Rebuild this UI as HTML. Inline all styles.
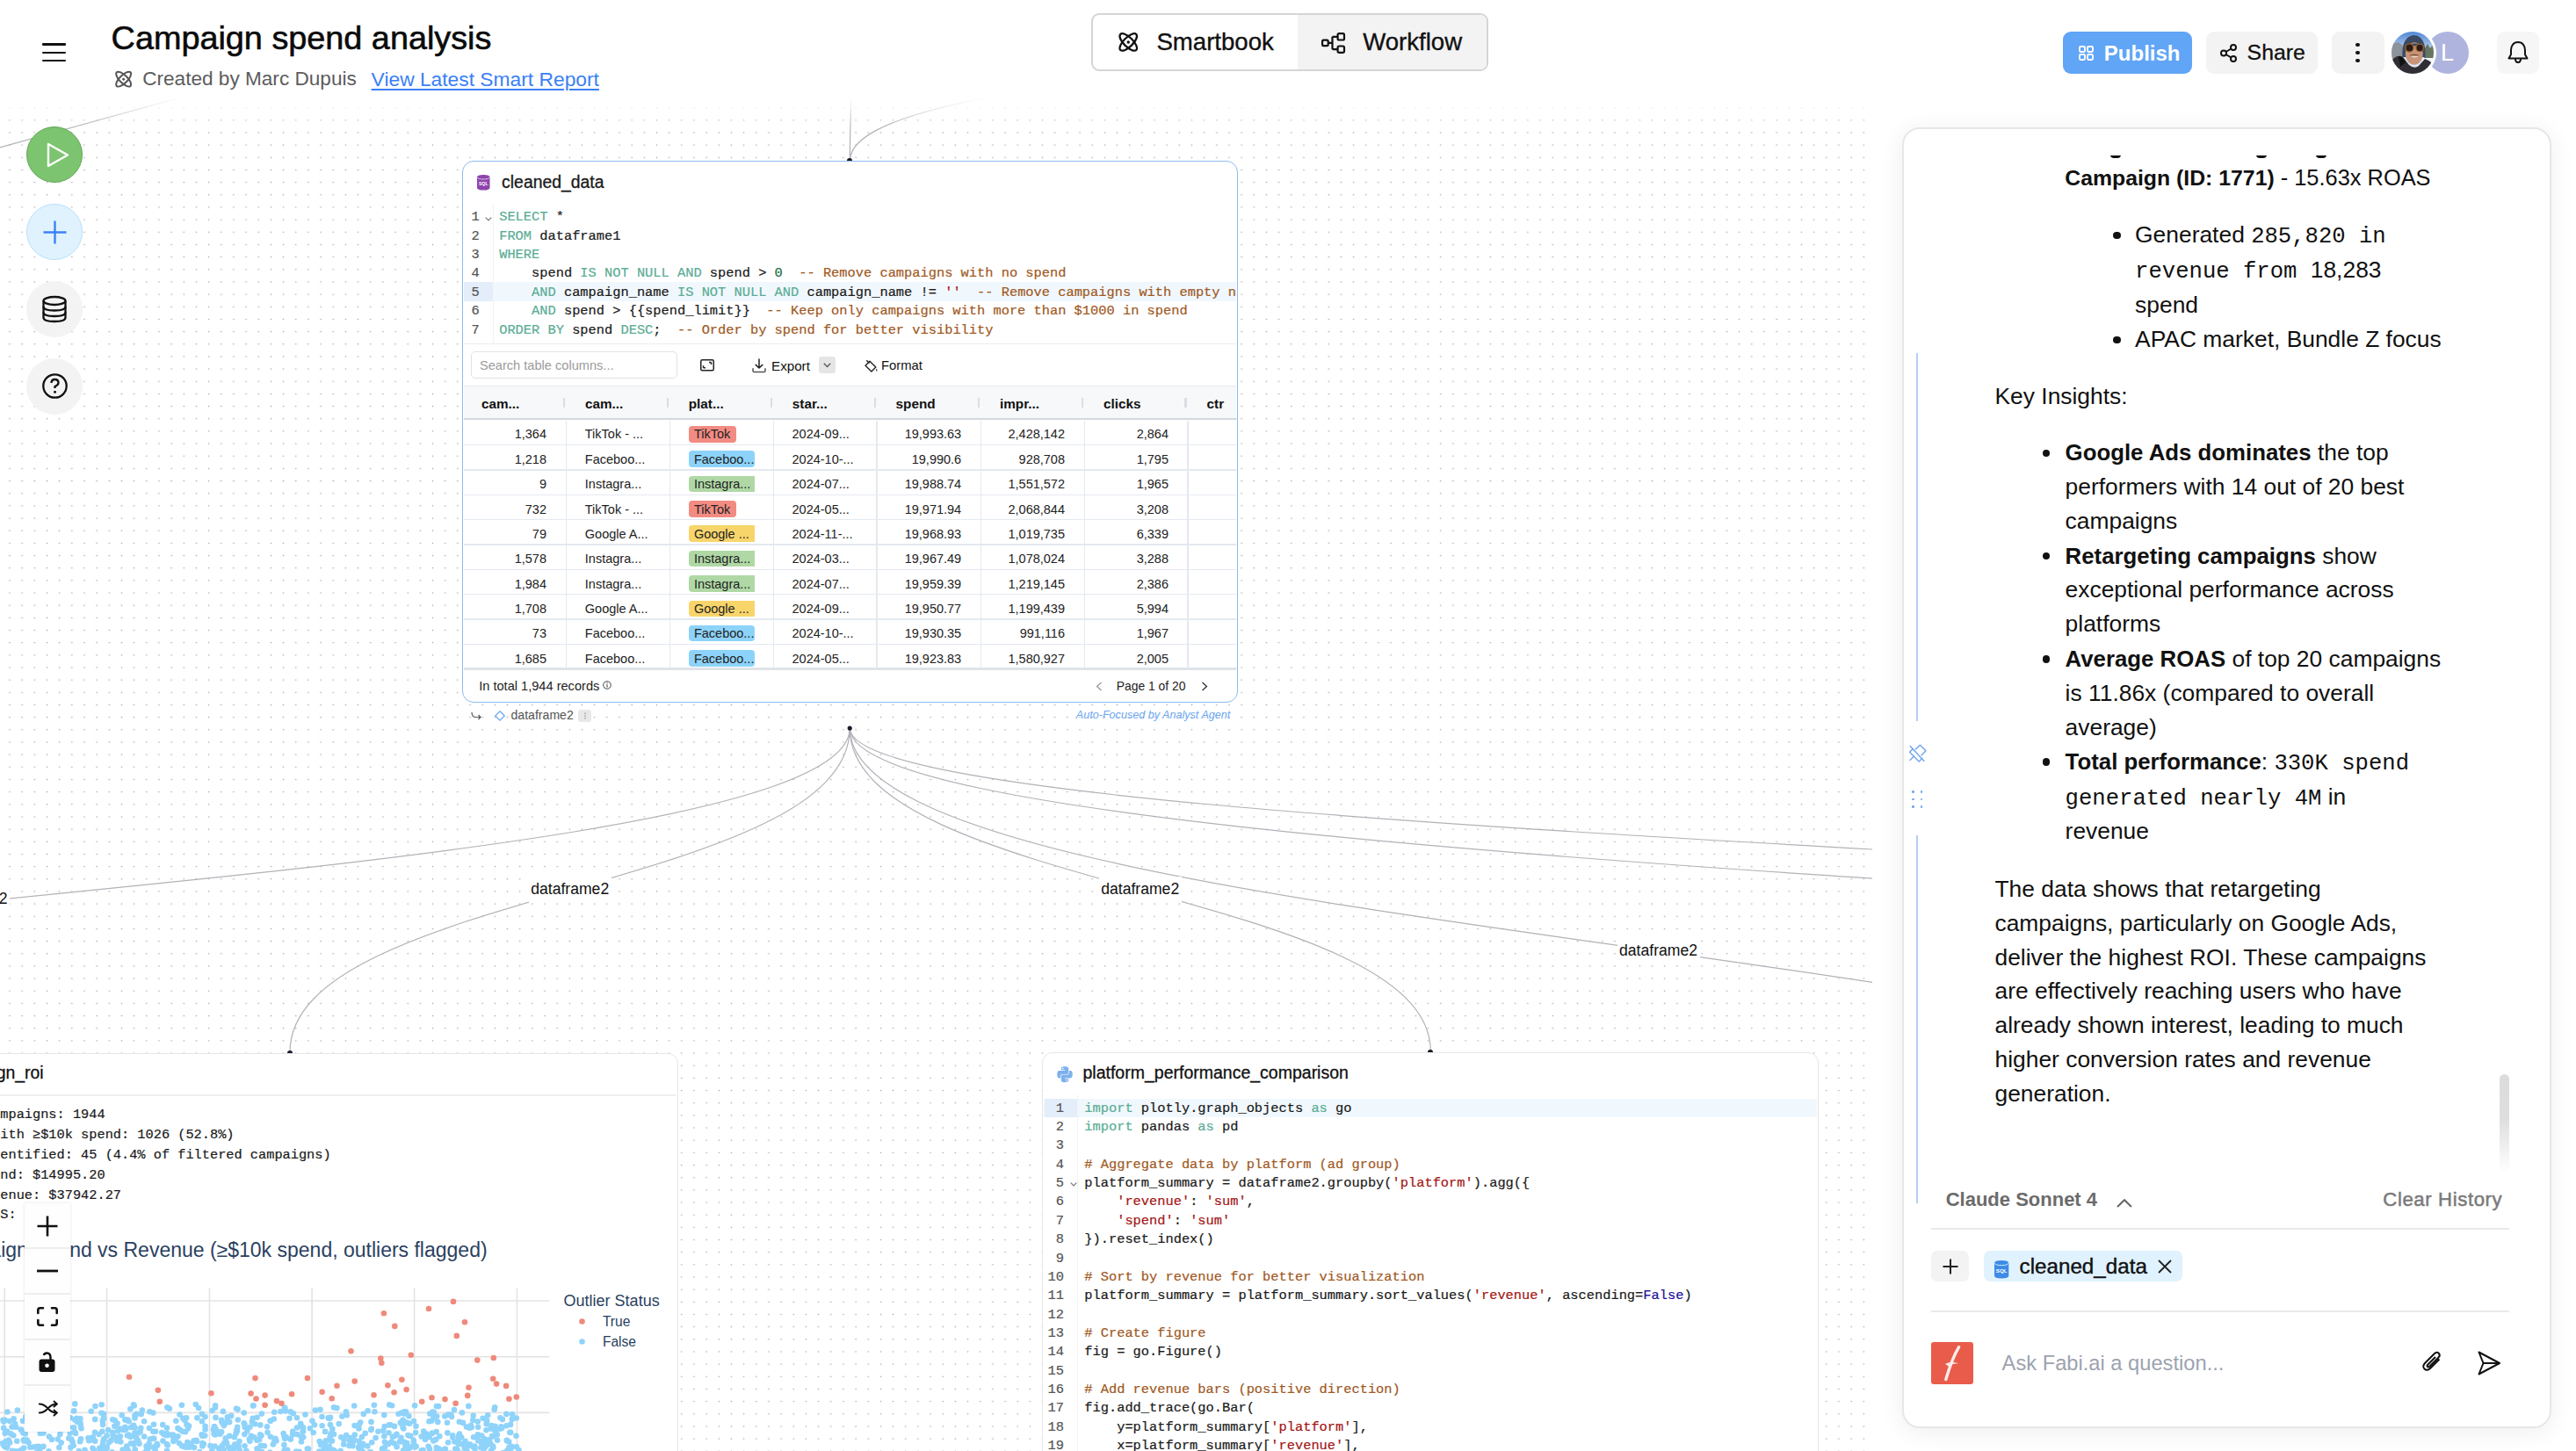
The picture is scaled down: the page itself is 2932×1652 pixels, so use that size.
<!DOCTYPE html><html><head><meta charset="utf-8"><title>Campaign spend analysis</title><style>
*{box-sizing:border-box;margin:0;padding:0}
html,body{width:2932px;height:1652px;overflow:hidden}
body{position:relative;background:#fff;font-family:"Liberation Sans",sans-serif;color:#111}
.a{position:absolute}
.t{position:absolute;white-space:pre;line-height:1}
svg.a{overflow:visible}
</style></head><body><div class="a" style="left:0;top:0;width:2131px;height:1652px;overflow:hidden"><svg class="a" style="left:0;top:0" width="2131" height="1652"><defs><pattern id="dp" x="3.918" y="2.219" width="14.163" height="14.163" patternUnits="userSpaceOnUse"><circle cx="7.082" cy="7.082" r="0.82" fill="#a8a8b0"/></pattern></defs><rect width="2131" height="1652" fill="url(#dp)"/></svg><svg class="a" style="left:0;top:0" width="2131" height="1652"><path d="M967.2,829.1 C967.2,1027.7 -1040.3,1027.7 -1040.3,1226.2" fill="none" stroke="#b1b1b8" stroke-width="1.2"/><path d="M967.2,829.1 C967.2,1013.5 330.0,1013.5 330.0,1198.0" fill="none" stroke="#b1b1b8" stroke-width="1.2"/><path d="M967.2,829.1 C967.2,1013.2 1628.4,1013.2 1628.4,1197.3" fill="none" stroke="#b1b1b8" stroke-width="1.2"/><path d="M967.2,829.1 C967.2,1077.8 2736.3,1077.8 2736.3,1326.6" fill="none" stroke="#b1b1b8" stroke-width="1.2"/><path d="M967.2,829.1 C967.2,974.6 3563.4,974.6 3563.4,1120.1" fill="none" stroke="#b1b1b8" stroke-width="1.2"/><path d="M967.2,829.1 C967.2,1035.1 4431.6,1035.1 4431.6,1241.1" fill="none" stroke="#b1b1b8" stroke-width="1.2"/><path d="M1435.2,8.65 C1435.2,95.8 967.3,95.8 967.3,183.0" fill="none" stroke="#b1b1b8" stroke-width="1.2"/><path d="M967.3,183 C967.3,150 968.8,112 972.5,-20" fill="none" stroke="#b1b1b8" stroke-width="1.2"/><path d="M-100,195.7 L420,51.5" fill="none" stroke="#b1b1b8" stroke-width="1.2"/><circle cx="967.2" cy="829.1" r="2.6" fill="#1a1a2a"/></svg><div class="a" style="left:-83.00px;top:1010.00px;width:94.00px;height:29.00px;background:#fff"></div><div class="t" style="left:-83.00px;top:1015.20px;font-family:'Liberation Sans', sans-serif;font-size:17.6px;width:94px;text-align:center;color:#111">dataframe2</div><div class="a" style="left:601.70px;top:998.70px;width:94.00px;height:29.00px;background:#fff"></div><div class="t" style="left:601.70px;top:1003.90px;font-family:'Liberation Sans', sans-serif;font-size:17.6px;width:94px;text-align:center;color:#111">dataframe2</div><div class="a" style="left:1250.70px;top:998.40px;width:94.00px;height:29.00px;background:#fff"></div><div class="t" style="left:1250.70px;top:1003.60px;font-family:'Liberation Sans', sans-serif;font-size:17.6px;width:94px;text-align:center;color:#111">dataframe2</div><div class="a" style="left:1840.50px;top:1069.10px;width:94.00px;height:29.00px;background:#fff"></div><div class="t" style="left:1840.50px;top:1074.30px;font-family:'Liberation Sans', sans-serif;font-size:17.6px;width:94px;text-align:center;color:#111">dataframe2</div></div><div class="a" style="left:525.50px;top:183.30px;width:883.90px;height:616.90px;background:#fff;border:1.5px solid #8dbbf1;border-radius:13px"></div><div class="a" style="left:0;top:0;width:2932px;height:1652px;clip-path:inset(185.3px 1524.6px 853.8px 527.5px round 11px)"><svg class="a" style="left:543.40px;top:199.30px;" width="14.5" height="17.5" viewBox="0 0 14.5 17.5"><path d="M0 2.8 Q0 0 7.25 0 Q14.5 0 14.5 2.8 V14.7 Q14.5 17.5 7.25 17.5 Q0 17.5 0 14.7 Z" fill="#8e44ad"/><path d="M0.5 2.8 Q0.5 5 7.25 5 Q14.0 5 14.0 2.8" fill="none" stroke="#fff" stroke-opacity="0.8" stroke-width="0.8"/><text x="7.25" y="11.55" font-family="Liberation Sans" font-weight="700" font-size="5.2" fill="#fff" text-anchor="middle">SQL</text></svg><div class="t" style="left:571.10px;top:197.87px;font-family:'Liberation Sans', sans-serif;font-size:19.4px;color:#1a1a1a;-webkit-text-stroke:0.3px #1a1a1a">cleaned_data</div><div class="a" style="left:527.50px;top:321.00px;width:33.90px;height:21.50px;background:#e3eefa"></div><div class="a" style="left:561.40px;top:321.00px;width:847.60px;height:21.50px;background:#f1f8fd"></div><div class="a" style="left:561.00px;top:231.80px;width:1.00px;height:160.00px;background:#f3f3f3"></div><div class="t" style="left:515.80px;top:240.43px;width:30px;text-align:right;font-family:'Liberation Mono', monospace;font-size:15.37px;-webkit-text-stroke-width:0.2px;color:#555">1</div><div class="t" style="left:568.20px;top:240.43px;font-family:'Liberation Mono', monospace;font-size:15.37px;-webkit-text-stroke-width:0.2px;"><span style="color:#5aac95">SELECT</span><span style="color:#1a1a1a"> *</span></div><div class="t" style="left:515.80px;top:261.78px;width:30px;text-align:right;font-family:'Liberation Mono', monospace;font-size:15.37px;-webkit-text-stroke-width:0.2px;color:#555">2</div><div class="t" style="left:568.20px;top:261.78px;font-family:'Liberation Mono', monospace;font-size:15.37px;-webkit-text-stroke-width:0.2px;"><span style="color:#5aac95">FROM</span><span style="color:#1a1a1a"> dataframe1</span></div><div class="t" style="left:515.80px;top:283.13px;width:30px;text-align:right;font-family:'Liberation Mono', monospace;font-size:15.37px;-webkit-text-stroke-width:0.2px;color:#555">3</div><div class="t" style="left:568.20px;top:283.13px;font-family:'Liberation Mono', monospace;font-size:15.37px;-webkit-text-stroke-width:0.2px;"><span style="color:#5aac95">WHERE</span></div><div class="t" style="left:515.80px;top:304.48px;width:30px;text-align:right;font-family:'Liberation Mono', monospace;font-size:15.37px;-webkit-text-stroke-width:0.2px;color:#555">4</div><div class="t" style="left:568.20px;top:304.48px;font-family:'Liberation Mono', monospace;font-size:15.37px;-webkit-text-stroke-width:0.2px;"><span style="color:#1a1a1a">    spend </span><span style="color:#5aac95">IS NOT NULL AND</span><span style="color:#1a1a1a"> spend &gt; </span><span style="color:#1d6b45">0</span><span style="color:#a0591f">  -- Remove campaigns with no spend</span></div><div class="t" style="left:515.80px;top:325.83px;width:30px;text-align:right;font-family:'Liberation Mono', monospace;font-size:15.37px;-webkit-text-stroke-width:0.2px;color:#555">5</div><div class="t" style="left:568.20px;top:325.83px;font-family:'Liberation Mono', monospace;font-size:15.37px;-webkit-text-stroke-width:0.2px;"><span style="color:#1a1a1a">    </span><span style="color:#5aac95">AND</span><span style="color:#1a1a1a"> campaign_name </span><span style="color:#5aac95">IS NOT NULL AND</span><span style="color:#1a1a1a"> campaign_name != </span><span style="color:#a31515">''</span><span style="color:#a0591f">  -- Remove campaigns with empty names</span></div><div class="t" style="left:515.80px;top:347.18px;width:30px;text-align:right;font-family:'Liberation Mono', monospace;font-size:15.37px;-webkit-text-stroke-width:0.2px;color:#555">6</div><div class="t" style="left:568.20px;top:347.18px;font-family:'Liberation Mono', monospace;font-size:15.37px;-webkit-text-stroke-width:0.2px;"><span style="color:#1a1a1a">    </span><span style="color:#5aac95">AND</span><span style="color:#1a1a1a"> spend &gt; {{spend_limit}}</span><span style="color:#a0591f">  -- Keep only campaigns with more than $1000 in spend</span></div><div class="t" style="left:515.80px;top:368.53px;width:30px;text-align:right;font-family:'Liberation Mono', monospace;font-size:15.37px;-webkit-text-stroke-width:0.2px;color:#555">7</div><div class="t" style="left:568.20px;top:368.53px;font-family:'Liberation Mono', monospace;font-size:15.37px;-webkit-text-stroke-width:0.2px;"><span style="color:#5aac95">ORDER BY</span><span style="color:#1a1a1a"> spend </span><span style="color:#5aac95">DESC</span><span style="color:#1a1a1a">;</span><span style="color:#a0591f">  -- Order by spend for better visibility</span></div><svg class="a" style="left:551.50px;top:246.50px;" width="8" height="5" viewBox="0 0 8 5"><path d="M0.7 0.7 L4 4 L7.3 0.7" fill="none" stroke="#777" stroke-width="1.2"/></svg><div class="a" style="left:527.50px;top:391.30px;width:881.50px;height:1.20px;background:#ececec"></div><div class="a" style="left:536.00px;top:399.50px;width:234.90px;height:31.80px;border:1.5px solid #e2e2e2;border-radius:5px"></div><div class="t" style="left:546.00px;top:409.34px;font-family:'Liberation Sans', sans-serif;font-size:14.6px;color:#9b9b9b">Search table columns...</div><svg class="a" style="left:796.50px;top:409.00px;" width="16" height="13.5" viewBox="0 0 16 13.5"><g fill="none" stroke="#222" stroke-width="1.5"><rect x="0.75" y="0.75" width="14.5" height="12" rx="1.5"/><path d="M3.5 9.8 L3.5 7.3 M3.5 9.8 L6 9.8 M12.5 3.5 L12.5 6 M12.5 3.5 L10 3.5"/></g></svg><svg class="a" style="left:855.80px;top:407.50px;" width="16" height="17" viewBox="0 0 16 17"><g fill="none" stroke-width="1.5" stroke-linecap="round" stroke-linejoin="round"><path d="M8 1 V11 M4.2 7.4 L8 11 L11.8 7.4" stroke="#222"/><path d="M1 11.8 V14.2 Q1 15.6 2.4 15.6 H13.6 Q15 15.6 15 14.2 V11.8" stroke="#555"/></g></svg><div class="t" style="left:878.00px;top:408.83px;font-family:'Liberation Sans', sans-serif;font-size:15.2px;color:#111">Export</div><div class="a" style="left:932.00px;top:406.30px;width:18.60px;height:18.60px;background:#e5e5e5;border-radius:3px"></div><svg class="a" style="left:937.00px;top:413.00px;" width="9" height="5.5" viewBox="0 0 9 5.5"><path d="M0.8 0.8 L4.5 4.5 L8.2 0.8" fill="none" stroke="#555" stroke-width="1.3"/></svg><svg class="a" style="left:983.70px;top:408.50px;" width="16" height="15" viewBox="0 0 16 15"><g fill="none" stroke="#222" stroke-width="1.4" stroke-linejoin="round"><path d="M1 7.2 L6 2.3 L12.8 9.1 L7.9 14 Z"/><path d="M2.3 1.2 L5.6 4.6"/></g><path d="M13.5 10.6 Q15.3 12.6 14 13.9 Q12.6 13.5 13.5 10.6Z" fill="#222"/></svg><div class="t" style="left:1003.00px;top:409.17px;font-family:'Liberation Sans', sans-serif;font-size:14.8px;color:#111">Format</div><div class="a" style="left:527.50px;top:439.40px;width:881.50px;height:38.60px;background:#f7f8f9;border-top:1px solid #e9e9e9"></div><div class="a" style="left:527.50px;top:476.20px;width:881.50px;height:2.20px;background:#d3d8df"></div><div class="t" style="left:547.90px;top:452.05px;font-family:'Liberation Sans', sans-serif;font-size:15.3px;color:#111;font-weight:700">cam...</div><div class="t" style="left:665.90px;top:452.05px;font-family:'Liberation Sans', sans-serif;font-size:15.3px;color:#111;font-weight:700">cam...</div><div class="t" style="left:783.70px;top:452.05px;font-family:'Liberation Sans', sans-serif;font-size:15.3px;color:#111;font-weight:700">plat...</div><div class="t" style="left:901.80px;top:452.05px;font-family:'Liberation Sans', sans-serif;font-size:15.3px;color:#111;font-weight:700">star...</div><div class="t" style="left:1019.60px;top:452.05px;font-family:'Liberation Sans', sans-serif;font-size:15.3px;color:#111;font-weight:700">spend</div><div class="t" style="left:1138.00px;top:452.05px;font-family:'Liberation Sans', sans-serif;font-size:15.3px;color:#111;font-weight:700">impr...</div><div class="t" style="left:1255.90px;top:452.05px;font-family:'Liberation Sans', sans-serif;font-size:15.3px;color:#111;font-weight:700">clicks</div><div class="t" style="left:1373.60px;top:452.05px;font-family:'Liberation Sans', sans-serif;font-size:15.3px;color:#111;font-weight:700">ctr</div><div class="a" style="left:640.70px;top:452.90px;width:2.20px;height:11.10px;background:#d9dee5"></div><div class="a" style="left:758.50px;top:452.90px;width:2.20px;height:11.10px;background:#d9dee5"></div><div class="a" style="left:876.60px;top:452.90px;width:2.20px;height:11.10px;background:#d9dee5"></div><div class="a" style="left:994.60px;top:452.90px;width:2.20px;height:11.10px;background:#d9dee5"></div><div class="a" style="left:1112.60px;top:452.90px;width:2.20px;height:11.10px;background:#d9dee5"></div><div class="a" style="left:1230.50px;top:452.90px;width:2.20px;height:11.10px;background:#d9dee5"></div><div class="a" style="left:1348.40px;top:452.90px;width:2.20px;height:11.10px;background:#d9dee5"></div><div class="t" style="left:522.00px;top:487.42px;width:100px;text-align:right;font-family:'Liberation Sans', sans-serif;font-size:14.5px;color:#222">1,364</div><div class="t" style="left:665.80px;top:487.42px;font-family:'Liberation Sans', sans-serif;font-size:14.5px;color:#222">TikTok - ...</div><div class="a" style="left:783.60px;top:485.00px;width:54.50px;height:18.60px;background:#f28b82;border-radius:4px"></div><div class="t" style="left:789.90px;top:487.42px;font-family:'Liberation Sans', sans-serif;font-size:14.5px;color:#222">TikTok</div><div class="t" style="left:901.50px;top:487.42px;font-family:'Liberation Sans', sans-serif;font-size:14.5px;color:#222">2024-09...</div><div class="t" style="left:994.20px;top:487.42px;width:100px;text-align:right;font-family:'Liberation Sans', sans-serif;font-size:14.5px;color:#222">19,993.63</div><div class="t" style="left:1112.00px;top:487.42px;width:100px;text-align:right;font-family:'Liberation Sans', sans-serif;font-size:14.5px;color:#222">2,428,142</div><div class="t" style="left:1230.00px;top:487.42px;width:100px;text-align:right;font-family:'Liberation Sans', sans-serif;font-size:14.5px;color:#222">2,864</div><div class="a" style="left:527.50px;top:505.81px;width:881.50px;height:1.50px;background:#e4e9f0"></div><div class="t" style="left:522.00px;top:515.78px;width:100px;text-align:right;font-family:'Liberation Sans', sans-serif;font-size:14.5px;color:#222">1,218</div><div class="t" style="left:665.80px;top:515.78px;font-family:'Liberation Sans', sans-serif;font-size:14.5px;color:#222">Faceboo...</div><div class="a" style="left:783.60px;top:513.36px;width:75.20px;height:18.60px;background:#8dd3f9;border-radius:4px"></div><div class="t" style="left:789.90px;top:515.78px;font-family:'Liberation Sans', sans-serif;font-size:14.5px;color:#222">Faceboo...</div><div class="t" style="left:901.50px;top:515.78px;font-family:'Liberation Sans', sans-serif;font-size:14.5px;color:#222">2024-10-...</div><div class="t" style="left:994.20px;top:515.78px;width:100px;text-align:right;font-family:'Liberation Sans', sans-serif;font-size:14.5px;color:#222">19,990.6</div><div class="t" style="left:1112.00px;top:515.78px;width:100px;text-align:right;font-family:'Liberation Sans', sans-serif;font-size:14.5px;color:#222">928,708</div><div class="t" style="left:1230.00px;top:515.78px;width:100px;text-align:right;font-family:'Liberation Sans', sans-serif;font-size:14.5px;color:#222">1,795</div><div class="a" style="left:527.50px;top:534.17px;width:881.50px;height:1.50px;background:#e4e9f0"></div><div class="t" style="left:522.00px;top:544.14px;width:100px;text-align:right;font-family:'Liberation Sans', sans-serif;font-size:14.5px;color:#222">9</div><div class="t" style="left:665.80px;top:544.14px;font-family:'Liberation Sans', sans-serif;font-size:14.5px;color:#222">Instagra...</div><div class="a" style="left:783.60px;top:541.72px;width:75.20px;height:18.60px;background:#afd8a5;border-radius:4px 0 0 4px"></div><div class="t" style="left:789.90px;top:544.14px;font-family:'Liberation Sans', sans-serif;font-size:14.5px;color:#222">Instagra...</div><div class="t" style="left:901.50px;top:544.14px;font-family:'Liberation Sans', sans-serif;font-size:14.5px;color:#222">2024-07...</div><div class="t" style="left:994.20px;top:544.14px;width:100px;text-align:right;font-family:'Liberation Sans', sans-serif;font-size:14.5px;color:#222">19,988.74</div><div class="t" style="left:1112.00px;top:544.14px;width:100px;text-align:right;font-family:'Liberation Sans', sans-serif;font-size:14.5px;color:#222">1,551,572</div><div class="t" style="left:1230.00px;top:544.14px;width:100px;text-align:right;font-family:'Liberation Sans', sans-serif;font-size:14.5px;color:#222">1,965</div><div class="a" style="left:527.50px;top:562.53px;width:881.50px;height:1.50px;background:#e4e9f0"></div><div class="t" style="left:522.00px;top:572.50px;width:100px;text-align:right;font-family:'Liberation Sans', sans-serif;font-size:14.5px;color:#222">732</div><div class="t" style="left:665.80px;top:572.50px;font-family:'Liberation Sans', sans-serif;font-size:14.5px;color:#222">TikTok - ...</div><div class="a" style="left:783.60px;top:570.08px;width:54.50px;height:18.60px;background:#f28b82;border-radius:4px"></div><div class="t" style="left:789.90px;top:572.50px;font-family:'Liberation Sans', sans-serif;font-size:14.5px;color:#222">TikTok</div><div class="t" style="left:901.50px;top:572.50px;font-family:'Liberation Sans', sans-serif;font-size:14.5px;color:#222">2024-05...</div><div class="t" style="left:994.20px;top:572.50px;width:100px;text-align:right;font-family:'Liberation Sans', sans-serif;font-size:14.5px;color:#222">19,971.94</div><div class="t" style="left:1112.00px;top:572.50px;width:100px;text-align:right;font-family:'Liberation Sans', sans-serif;font-size:14.5px;color:#222">2,068,844</div><div class="t" style="left:1230.00px;top:572.50px;width:100px;text-align:right;font-family:'Liberation Sans', sans-serif;font-size:14.5px;color:#222">3,208</div><div class="a" style="left:527.50px;top:590.89px;width:881.50px;height:1.50px;background:#e4e9f0"></div><div class="t" style="left:522.00px;top:600.86px;width:100px;text-align:right;font-family:'Liberation Sans', sans-serif;font-size:14.5px;color:#222">79</div><div class="t" style="left:665.80px;top:600.86px;font-family:'Liberation Sans', sans-serif;font-size:14.5px;color:#222">Google A...</div><div class="a" style="left:783.60px;top:598.44px;width:75.20px;height:18.60px;background:#f8d56b;border-radius:4px 0 0 4px"></div><div class="t" style="left:789.90px;top:600.86px;font-family:'Liberation Sans', sans-serif;font-size:14.5px;color:#222">Google ...</div><div class="t" style="left:901.50px;top:600.86px;font-family:'Liberation Sans', sans-serif;font-size:14.5px;color:#222">2024-11-...</div><div class="t" style="left:994.20px;top:600.86px;width:100px;text-align:right;font-family:'Liberation Sans', sans-serif;font-size:14.5px;color:#222">19,968.93</div><div class="t" style="left:1112.00px;top:600.86px;width:100px;text-align:right;font-family:'Liberation Sans', sans-serif;font-size:14.5px;color:#222">1,019,735</div><div class="t" style="left:1230.00px;top:600.86px;width:100px;text-align:right;font-family:'Liberation Sans', sans-serif;font-size:14.5px;color:#222">6,339</div><div class="a" style="left:527.50px;top:619.25px;width:881.50px;height:1.50px;background:#e4e9f0"></div><div class="t" style="left:522.00px;top:629.22px;width:100px;text-align:right;font-family:'Liberation Sans', sans-serif;font-size:14.5px;color:#222">1,578</div><div class="t" style="left:665.80px;top:629.22px;font-family:'Liberation Sans', sans-serif;font-size:14.5px;color:#222">Instagra...</div><div class="a" style="left:783.60px;top:626.80px;width:75.20px;height:18.60px;background:#afd8a5;border-radius:4px 0 0 4px"></div><div class="t" style="left:789.90px;top:629.22px;font-family:'Liberation Sans', sans-serif;font-size:14.5px;color:#222">Instagra...</div><div class="t" style="left:901.50px;top:629.22px;font-family:'Liberation Sans', sans-serif;font-size:14.5px;color:#222">2024-03...</div><div class="t" style="left:994.20px;top:629.22px;width:100px;text-align:right;font-family:'Liberation Sans', sans-serif;font-size:14.5px;color:#222">19,967.49</div><div class="t" style="left:1112.00px;top:629.22px;width:100px;text-align:right;font-family:'Liberation Sans', sans-serif;font-size:14.5px;color:#222">1,078,024</div><div class="t" style="left:1230.00px;top:629.22px;width:100px;text-align:right;font-family:'Liberation Sans', sans-serif;font-size:14.5px;color:#222">3,288</div><div class="a" style="left:527.50px;top:647.61px;width:881.50px;height:1.50px;background:#e4e9f0"></div><div class="t" style="left:522.00px;top:657.58px;width:100px;text-align:right;font-family:'Liberation Sans', sans-serif;font-size:14.5px;color:#222">1,984</div><div class="t" style="left:665.80px;top:657.58px;font-family:'Liberation Sans', sans-serif;font-size:14.5px;color:#222">Instagra...</div><div class="a" style="left:783.60px;top:655.16px;width:75.20px;height:18.60px;background:#afd8a5;border-radius:4px 0 0 4px"></div><div class="t" style="left:789.90px;top:657.58px;font-family:'Liberation Sans', sans-serif;font-size:14.5px;color:#222">Instagra...</div><div class="t" style="left:901.50px;top:657.58px;font-family:'Liberation Sans', sans-serif;font-size:14.5px;color:#222">2024-07...</div><div class="t" style="left:994.20px;top:657.58px;width:100px;text-align:right;font-family:'Liberation Sans', sans-serif;font-size:14.5px;color:#222">19,959.39</div><div class="t" style="left:1112.00px;top:657.58px;width:100px;text-align:right;font-family:'Liberation Sans', sans-serif;font-size:14.5px;color:#222">1,219,145</div><div class="t" style="left:1230.00px;top:657.58px;width:100px;text-align:right;font-family:'Liberation Sans', sans-serif;font-size:14.5px;color:#222">2,386</div><div class="a" style="left:527.50px;top:675.97px;width:881.50px;height:1.50px;background:#e4e9f0"></div><div class="t" style="left:522.00px;top:685.94px;width:100px;text-align:right;font-family:'Liberation Sans', sans-serif;font-size:14.5px;color:#222">1,708</div><div class="t" style="left:665.80px;top:685.94px;font-family:'Liberation Sans', sans-serif;font-size:14.5px;color:#222">Google A...</div><div class="a" style="left:783.60px;top:683.52px;width:75.20px;height:18.60px;background:#f8d56b;border-radius:4px 0 0 4px"></div><div class="t" style="left:789.90px;top:685.94px;font-family:'Liberation Sans', sans-serif;font-size:14.5px;color:#222">Google ...</div><div class="t" style="left:901.50px;top:685.94px;font-family:'Liberation Sans', sans-serif;font-size:14.5px;color:#222">2024-09...</div><div class="t" style="left:994.20px;top:685.94px;width:100px;text-align:right;font-family:'Liberation Sans', sans-serif;font-size:14.5px;color:#222">19,950.77</div><div class="t" style="left:1112.00px;top:685.94px;width:100px;text-align:right;font-family:'Liberation Sans', sans-serif;font-size:14.5px;color:#222">1,199,439</div><div class="t" style="left:1230.00px;top:685.94px;width:100px;text-align:right;font-family:'Liberation Sans', sans-serif;font-size:14.5px;color:#222">5,994</div><div class="a" style="left:527.50px;top:704.33px;width:881.50px;height:1.50px;background:#e4e9f0"></div><div class="t" style="left:522.00px;top:714.30px;width:100px;text-align:right;font-family:'Liberation Sans', sans-serif;font-size:14.5px;color:#222">73</div><div class="t" style="left:665.80px;top:714.30px;font-family:'Liberation Sans', sans-serif;font-size:14.5px;color:#222">Faceboo...</div><div class="a" style="left:783.60px;top:711.88px;width:75.20px;height:18.60px;background:#8dd3f9;border-radius:4px"></div><div class="t" style="left:789.90px;top:714.30px;font-family:'Liberation Sans', sans-serif;font-size:14.5px;color:#222">Faceboo...</div><div class="t" style="left:901.50px;top:714.30px;font-family:'Liberation Sans', sans-serif;font-size:14.5px;color:#222">2024-10-...</div><div class="t" style="left:994.20px;top:714.30px;width:100px;text-align:right;font-family:'Liberation Sans', sans-serif;font-size:14.5px;color:#222">19,930.35</div><div class="t" style="left:1112.00px;top:714.30px;width:100px;text-align:right;font-family:'Liberation Sans', sans-serif;font-size:14.5px;color:#222">991,116</div><div class="t" style="left:1230.00px;top:714.30px;width:100px;text-align:right;font-family:'Liberation Sans', sans-serif;font-size:14.5px;color:#222">1,967</div><div class="a" style="left:527.50px;top:732.69px;width:881.50px;height:1.50px;background:#e4e9f0"></div><div class="t" style="left:522.00px;top:742.66px;width:100px;text-align:right;font-family:'Liberation Sans', sans-serif;font-size:14.5px;color:#222">1,685</div><div class="t" style="left:665.80px;top:742.66px;font-family:'Liberation Sans', sans-serif;font-size:14.5px;color:#222">Faceboo...</div><div class="a" style="left:783.60px;top:740.24px;width:75.20px;height:18.60px;background:#8dd3f9;border-radius:4px"></div><div class="t" style="left:789.90px;top:742.66px;font-family:'Liberation Sans', sans-serif;font-size:14.5px;color:#222">Faceboo...</div><div class="t" style="left:901.50px;top:742.66px;font-family:'Liberation Sans', sans-serif;font-size:14.5px;color:#222">2024-05...</div><div class="t" style="left:994.20px;top:742.66px;width:100px;text-align:right;font-family:'Liberation Sans', sans-serif;font-size:14.5px;color:#222">19,923.83</div><div class="t" style="left:1112.00px;top:742.66px;width:100px;text-align:right;font-family:'Liberation Sans', sans-serif;font-size:14.5px;color:#222">1,580,927</div><div class="t" style="left:1230.00px;top:742.66px;width:100px;text-align:right;font-family:'Liberation Sans', sans-serif;font-size:14.5px;color:#222">2,005</div><div class="a" style="left:527.50px;top:760.40px;width:881.50px;height:2.20px;background:#dfe3e9"></div><div class="a" style="left:643.75px;top:479.00px;width:1.50px;height:281.50px;background:#e4e9f0"></div><div class="a" style="left:761.55px;top:479.00px;width:1.50px;height:281.50px;background:#e4e9f0"></div><div class="a" style="left:879.65px;top:479.00px;width:1.50px;height:281.50px;background:#e4e9f0"></div><div class="a" style="left:997.45px;top:479.00px;width:1.50px;height:281.50px;background:#e4e9f0"></div><div class="a" style="left:1115.85px;top:479.00px;width:1.50px;height:281.50px;background:#e4e9f0"></div><div class="a" style="left:1233.75px;top:479.00px;width:1.50px;height:281.50px;background:#e4e9f0"></div><div class="a" style="left:1351.45px;top:479.00px;width:1.50px;height:281.50px;background:#e4e9f0"></div><div class="t" style="left:545.20px;top:774.24px;font-family:'Liberation Sans', sans-serif;font-size:14.6px;color:#222">In total 1,944 records</div><svg class="a" style="left:685.50px;top:774.50px;" width="10" height="10" viewBox="0 0 10 10"><circle cx="5" cy="5" r="4.3" fill="none" stroke="#333" stroke-width="0.9"/><path d="M5 4.2 V7.6" stroke="#333" stroke-width="1"/><circle cx="5" cy="2.7" r="0.6" fill="#333"/></svg><svg class="a" style="left:1247.00px;top:776.00px;" width="8" height="11" viewBox="0 0 8 11"><path d="M6.5 1 L1.5 5.5 L6.5 10" fill="none" stroke="#999" stroke-width="1.3"/></svg><div class="t" style="left:1270.70px;top:775.23px;font-family:'Liberation Sans', sans-serif;font-size:13.9px;color:#222">Page 1 of 20</div><svg class="a" style="left:1366.50px;top:776.00px;" width="8" height="11" viewBox="0 0 8 11"><path d="M1.5 1 L6.5 5.5 L1.5 10" fill="none" stroke="#333" stroke-width="1.3"/></svg></div><svg class="a" style="left:535.50px;top:810.00px;" width="12" height="9" viewBox="0 0 12 9"><path d="M1 1 Q1 6 5 6.5 H11 M8.5 4 L11 6.5 L8.5 9" fill="none" stroke="#555" stroke-width="1.2"/></svg><svg class="a" style="left:562.50px;top:808.50px;" width="12" height="12" viewBox="0 0 12 12"><path d="M6 0.8 L11.2 6 L6 11.2 L0.8 6 Z" fill="none" stroke="#6fa8f0" stroke-width="1.3"/></svg><div class="t" style="left:581.50px;top:806.86px;font-family:'Liberation Sans', sans-serif;font-size:14.1px;color:#555">dataframe2</div><div class="a" style="left:658.30px;top:807.80px;width:14.90px;height:14.40px;background:#e8e8e8;border-radius:3px"></div><svg class="a" style="left:664.00px;top:811.00px;" width="4" height="8" viewBox="0 0 4 8"><circle cx="2" cy="1.2" r="0.8" fill="#888"/><circle cx="2" cy="4" r="0.8" fill="#888"/><circle cx="2" cy="6.8" r="0.8" fill="#888"/></svg><div class="t" style="left:1100.30px;top:808.13px;width:300px;text-align:right;font-family:'Liberation Sans', sans-serif;font-size:12.6px;color:#6aa5ef;font-style:italic">Auto-Focused by Analyst Agent</div><svg class="a" style="left:964.30px;top:180.20px;" width="6" height="3" viewBox="0 0 6 3"><path d="M0 3 A3 3 0 0 1 6 3 Z" fill="#1a1a2a"/></svg><div class="a" style="left:-40.00px;top:1198.50px;width:812.00px;height:501.50px;background:#fff;border:1.5px solid #e6e6e6;border-radius:12px"></div><div class="a" style="left:0;top:0;width:2932px;height:1652px;clip-path:inset(1200.5px 2162.0px 0px 0px round 10px)"><div class="t" style="left:-150.40px;top:1211.57px;width:200px;text-align:right;font-family:'Liberation Sans', sans-serif;font-size:19.4px;color:#111;-webkit-text-stroke:0.3px #111">campaign_roi</div><div class="a" style="left:0.00px;top:1246.00px;width:770.00px;height:1.50px;background:#efefef"></div><div class="t" style="left:0.30px;top:1262.18px;font-family:'Liberation Mono', monospace;font-size:15.3px;-webkit-text-stroke-width:0.2px;color:#1a1a1a">mpaigns: 1944</div><div class="t" style="left:0.30px;top:1285.03px;font-family:'Liberation Mono', monospace;font-size:15.3px;-webkit-text-stroke-width:0.2px;color:#1a1a1a">ith ≥$10k spend: 1026 (52.8%)</div><div class="t" style="left:0.30px;top:1307.88px;font-family:'Liberation Mono', monospace;font-size:15.3px;-webkit-text-stroke-width:0.2px;color:#1a1a1a">entified: 45 (4.4% of filtered campaigns)</div><div class="t" style="left:0.30px;top:1330.73px;font-family:'Liberation Mono', monospace;font-size:15.3px;-webkit-text-stroke-width:0.2px;color:#1a1a1a">nd: $14995.20</div><div class="t" style="left:0.30px;top:1353.58px;font-family:'Liberation Mono', monospace;font-size:15.3px;-webkit-text-stroke-width:0.2px;color:#1a1a1a">enue: $37942.27</div><div class="t" style="left:0.30px;top:1376.43px;font-family:'Liberation Mono', monospace;font-size:15.3px;-webkit-text-stroke-width:0.2px;color:#1a1a1a">S: </div><div class="t" style="left:-245.40px;top:1411.83px;width:800px;text-align:right;font-family:'Liberation Sans', sans-serif;font-size:23.0px;color:#2a3f5f">Campaign Spend vs Revenue (≥$10k spend, outliers flagged)</div><svg class="a" style="left:0;top:0" width="2131" height="1652"><path d="M5.2 1466.4 V1652" stroke="#e3e3e3" stroke-width="1.6"/><path d="M121.6 1466.4 V1652" stroke="#e3e3e3" stroke-width="1.6"/><path d="M238.5 1466.4 V1652" stroke="#e3e3e3" stroke-width="1.6"/><path d="M355.1 1466.4 V1652" stroke="#e3e3e3" stroke-width="1.6"/><path d="M471.6 1466.4 V1652" stroke="#e3e3e3" stroke-width="1.6"/><path d="M588.4 1466.4 V1652" stroke="#e3e3e3" stroke-width="1.6"/><path d="M0 1481.0 H625.3" stroke="#e3e3e3" stroke-width="1.6"/><path d="M0 1544.7 H625.3" stroke="#e3e3e3" stroke-width="1.6"/><path d="M0 1608.4 H625.3" stroke="#e3e3e3" stroke-width="1.6"/><circle cx="85.1" cy="1630.5" r="3.3" fill="#8fd3fa"/><circle cx="38.2" cy="1647.5" r="3.3" fill="#8fd3fa"/><circle cx="213.3" cy="1642.0" r="3.3" fill="#8fd3fa"/><circle cx="297.9" cy="1609.6" r="3.3" fill="#8fd3fa"/><circle cx="253.9" cy="1606.9" r="3.3" fill="#8fd3fa"/><circle cx="49.2" cy="1611.0" r="3.3" fill="#8fd3fa"/><circle cx="488.6" cy="1636.3" r="3.3" fill="#8fd3fa"/><circle cx="128.3" cy="1616.3" r="3.3" fill="#8fd3fa"/><circle cx="560.8" cy="1646.4" r="3.3" fill="#8fd3fa"/><circle cx="231.8" cy="1644.0" r="3.3" fill="#8fd3fa"/><circle cx="22.8" cy="1661.1" r="3.3" fill="#8fd3fa"/><circle cx="167.9" cy="1656.4" r="3.3" fill="#8fd3fa"/><circle cx="65.3" cy="1618.0" r="3.3" fill="#8fd3fa"/><circle cx="482.2" cy="1629.6" r="3.3" fill="#8fd3fa"/><circle cx="342.2" cy="1620.9" r="3.3" fill="#8fd3fa"/><circle cx="217.3" cy="1646.9" r="3.3" fill="#8fd3fa"/><circle cx="32.5" cy="1642.6" r="3.3" fill="#8fd3fa"/><circle cx="118.0" cy="1609.8" r="3.3" fill="#8fd3fa"/><circle cx="250.3" cy="1648.8" r="3.3" fill="#8fd3fa"/><circle cx="344.6" cy="1629.9" r="3.3" fill="#8fd3fa"/><circle cx="174.0" cy="1637.8" r="3.3" fill="#8fd3fa"/><circle cx="412.3" cy="1653.7" r="3.3" fill="#8fd3fa"/><circle cx="337.9" cy="1625.5" r="3.3" fill="#8fd3fa"/><circle cx="517.5" cy="1641.5" r="3.3" fill="#8fd3fa"/><circle cx="166.9" cy="1651.0" r="3.3" fill="#8fd3fa"/><circle cx="65.5" cy="1661.2" r="3.3" fill="#8fd3fa"/><circle cx="447.0" cy="1635.9" r="3.3" fill="#8fd3fa"/><circle cx="286.9" cy="1618.7" r="3.3" fill="#8fd3fa"/><circle cx="393.9" cy="1607.2" r="3.3" fill="#8fd3fa"/><circle cx="337.1" cy="1652.5" r="3.3" fill="#8fd3fa"/><circle cx="182.3" cy="1657.1" r="3.3" fill="#8fd3fa"/><circle cx="349.8" cy="1649.5" r="3.3" fill="#8fd3fa"/><circle cx="267.4" cy="1644.2" r="3.3" fill="#8fd3fa"/><circle cx="559.0" cy="1655.6" r="3.3" fill="#8fd3fa"/><circle cx="391.5" cy="1638.9" r="3.3" fill="#8fd3fa"/><circle cx="413.8" cy="1609.9" r="3.3" fill="#8fd3fa"/><circle cx="587.9" cy="1647.3" r="3.3" fill="#8fd3fa"/><circle cx="164.9" cy="1654.9" r="3.3" fill="#8fd3fa"/><circle cx="394.2" cy="1634.1" r="3.3" fill="#8fd3fa"/><circle cx="270.6" cy="1604.6" r="3.3" fill="#8fd3fa"/><circle cx="64.9" cy="1620.0" r="3.3" fill="#8fd3fa"/><circle cx="453.6" cy="1609.7" r="3.3" fill="#8fd3fa"/><circle cx="142.8" cy="1616.8" r="3.3" fill="#8fd3fa"/><circle cx="515.2" cy="1634.4" r="3.3" fill="#8fd3fa"/><circle cx="263.2" cy="1612.1" r="3.3" fill="#8fd3fa"/><circle cx="522.4" cy="1642.7" r="3.3" fill="#8fd3fa"/><circle cx="510.8" cy="1654.8" r="3.3" fill="#8fd3fa"/><circle cx="242.9" cy="1627.7" r="3.3" fill="#8fd3fa"/><circle cx="522.9" cy="1632.6" r="3.3" fill="#8fd3fa"/><circle cx="85.1" cy="1660.4" r="3.3" fill="#8fd3fa"/><circle cx="133.5" cy="1620.6" r="3.3" fill="#8fd3fa"/><circle cx="284.5" cy="1624.7" r="3.3" fill="#8fd3fa"/><circle cx="151.9" cy="1644.6" r="3.3" fill="#8fd3fa"/><circle cx="245.1" cy="1600.4" r="3.3" fill="#8fd3fa"/><circle cx="333.1" cy="1633.2" r="3.3" fill="#8fd3fa"/><circle cx="407.2" cy="1660.2" r="3.3" fill="#8fd3fa"/><circle cx="363.7" cy="1641.0" r="3.3" fill="#8fd3fa"/><circle cx="27.2" cy="1648.6" r="3.3" fill="#8fd3fa"/><circle cx="460.6" cy="1658.1" r="3.3" fill="#8fd3fa"/><circle cx="471.3" cy="1657.1" r="3.3" fill="#8fd3fa"/><circle cx="233.2" cy="1634.5" r="3.3" fill="#8fd3fa"/><circle cx="373.7" cy="1614.4" r="3.3" fill="#8fd3fa"/><circle cx="35.2" cy="1610.1" r="3.3" fill="#8fd3fa"/><circle cx="91.9" cy="1623.0" r="3.3" fill="#8fd3fa"/><circle cx="26.4" cy="1631.5" r="3.3" fill="#8fd3fa"/><circle cx="85.3" cy="1598.4" r="3.3" fill="#8fd3fa"/><circle cx="212.1" cy="1614.2" r="3.3" fill="#8fd3fa"/><circle cx="517.0" cy="1605.1" r="3.3" fill="#8fd3fa"/><circle cx="83.7" cy="1645.8" r="3.3" fill="#8fd3fa"/><circle cx="202.4" cy="1626.0" r="3.3" fill="#8fd3fa"/><circle cx="68.3" cy="1632.9" r="3.3" fill="#8fd3fa"/><circle cx="587.9" cy="1656.0" r="3.3" fill="#8fd3fa"/><circle cx="283.8" cy="1638.5" r="3.3" fill="#8fd3fa"/><circle cx="56.0" cy="1612.7" r="3.3" fill="#8fd3fa"/><circle cx="153.1" cy="1631.7" r="3.3" fill="#8fd3fa"/><circle cx="91.4" cy="1655.2" r="3.3" fill="#8fd3fa"/><circle cx="562.7" cy="1604.7" r="3.3" fill="#8fd3fa"/><circle cx="82.5" cy="1641.6" r="3.3" fill="#8fd3fa"/><circle cx="11.1" cy="1642.4" r="3.3" fill="#8fd3fa"/><circle cx="579.2" cy="1641.6" r="3.3" fill="#8fd3fa"/><circle cx="410.6" cy="1656.6" r="3.3" fill="#8fd3fa"/><circle cx="213.9" cy="1626.6" r="3.3" fill="#8fd3fa"/><circle cx="455.8" cy="1619.9" r="3.3" fill="#8fd3fa"/><circle cx="460.1" cy="1641.9" r="3.3" fill="#8fd3fa"/><circle cx="128.2" cy="1630.9" r="3.3" fill="#8fd3fa"/><circle cx="583.0" cy="1654.5" r="3.3" fill="#8fd3fa"/><circle cx="476.2" cy="1656.2" r="3.3" fill="#8fd3fa"/><circle cx="436.7" cy="1654.7" r="3.3" fill="#8fd3fa"/><circle cx="304.0" cy="1624.3" r="3.3" fill="#8fd3fa"/><circle cx="12.3" cy="1632.4" r="3.3" fill="#8fd3fa"/><circle cx="161.8" cy="1605.5" r="3.3" fill="#8fd3fa"/><circle cx="408.4" cy="1626.5" r="3.3" fill="#8fd3fa"/><circle cx="262.0" cy="1660.3" r="3.3" fill="#8fd3fa"/><circle cx="584.9" cy="1659.6" r="3.3" fill="#8fd3fa"/><circle cx="212.7" cy="1660.3" r="3.3" fill="#8fd3fa"/><circle cx="130.4" cy="1623.8" r="3.3" fill="#8fd3fa"/><circle cx="117.0" cy="1622.1" r="3.3" fill="#8fd3fa"/><circle cx="532.5" cy="1646.2" r="3.3" fill="#8fd3fa"/><circle cx="281.2" cy="1655.7" r="3.3" fill="#8fd3fa"/><circle cx="472.4" cy="1647.6" r="3.3" fill="#8fd3fa"/><circle cx="389.4" cy="1612.6" r="3.3" fill="#8fd3fa"/><circle cx="462.0" cy="1658.5" r="3.3" fill="#8fd3fa"/><circle cx="280.4" cy="1651.9" r="3.3" fill="#8fd3fa"/><circle cx="466.1" cy="1620.8" r="3.3" fill="#8fd3fa"/><circle cx="473.1" cy="1631.1" r="3.3" fill="#8fd3fa"/><circle cx="231.3" cy="1660.9" r="3.3" fill="#8fd3fa"/><circle cx="560.2" cy="1635.0" r="3.3" fill="#8fd3fa"/><circle cx="96.5" cy="1650.8" r="3.3" fill="#8fd3fa"/><circle cx="85.2" cy="1616.6" r="3.3" fill="#8fd3fa"/><circle cx="476.5" cy="1658.3" r="3.3" fill="#8fd3fa"/><circle cx="488.4" cy="1618.2" r="3.3" fill="#8fd3fa"/><circle cx="387.4" cy="1661.2" r="3.3" fill="#8fd3fa"/><circle cx="322.6" cy="1632.1" r="3.3" fill="#8fd3fa"/><circle cx="3.5" cy="1616.9" r="3.3" fill="#8fd3fa"/><circle cx="382.9" cy="1660.9" r="3.3" fill="#8fd3fa"/><circle cx="552.4" cy="1641.6" r="3.3" fill="#8fd3fa"/><circle cx="515.4" cy="1636.8" r="3.3" fill="#8fd3fa"/><circle cx="121.0" cy="1655.1" r="3.3" fill="#8fd3fa"/><circle cx="169.9" cy="1626.0" r="3.3" fill="#8fd3fa"/><circle cx="345.1" cy="1625.2" r="3.3" fill="#8fd3fa"/><circle cx="245.2" cy="1626.5" r="3.3" fill="#8fd3fa"/><circle cx="538.3" cy="1616.9" r="3.3" fill="#8fd3fa"/><circle cx="268.5" cy="1632.3" r="3.3" fill="#8fd3fa"/><circle cx="534.9" cy="1644.3" r="3.3" fill="#8fd3fa"/><circle cx="542.9" cy="1636.1" r="3.3" fill="#8fd3fa"/><circle cx="312.5" cy="1640.3" r="3.3" fill="#8fd3fa"/><circle cx="6.2" cy="1641.4" r="3.3" fill="#8fd3fa"/><circle cx="104.3" cy="1637.1" r="3.3" fill="#8fd3fa"/><circle cx="472.1" cy="1600.3" r="3.3" fill="#8fd3fa"/><circle cx="277.7" cy="1620.3" r="3.3" fill="#8fd3fa"/><circle cx="327.2" cy="1650.8" r="3.3" fill="#8fd3fa"/><circle cx="304.5" cy="1630.7" r="3.3" fill="#8fd3fa"/><circle cx="463.2" cy="1643.0" r="3.3" fill="#8fd3fa"/><circle cx="329.5" cy="1614.7" r="3.3" fill="#8fd3fa"/><circle cx="160.3" cy="1625.8" r="3.3" fill="#8fd3fa"/><circle cx="298.1" cy="1652.8" r="3.3" fill="#8fd3fa"/><circle cx="448.7" cy="1643.3" r="3.3" fill="#8fd3fa"/><circle cx="259.6" cy="1658.6" r="3.3" fill="#8fd3fa"/><circle cx="296.8" cy="1645.7" r="3.3" fill="#8fd3fa"/><circle cx="408.6" cy="1640.8" r="3.3" fill="#8fd3fa"/><circle cx="313.4" cy="1637.8" r="3.3" fill="#8fd3fa"/><circle cx="557.1" cy="1639.1" r="3.3" fill="#8fd3fa"/><circle cx="518.3" cy="1649.6" r="3.3" fill="#8fd3fa"/><circle cx="150.0" cy="1659.8" r="3.3" fill="#8fd3fa"/><circle cx="558.1" cy="1643.2" r="3.3" fill="#8fd3fa"/><circle cx="76.9" cy="1655.6" r="3.3" fill="#8fd3fa"/><circle cx="258.9" cy="1616.1" r="3.3" fill="#8fd3fa"/><circle cx="138.7" cy="1611.3" r="3.3" fill="#8fd3fa"/><circle cx="394.7" cy="1611.3" r="3.3" fill="#8fd3fa"/><circle cx="530.5" cy="1653.3" r="3.3" fill="#8fd3fa"/><circle cx="422.5" cy="1618.9" r="3.3" fill="#8fd3fa"/><circle cx="80.4" cy="1647.9" r="3.3" fill="#8fd3fa"/><circle cx="572.6" cy="1657.4" r="3.3" fill="#8fd3fa"/><circle cx="563.6" cy="1623.8" r="3.3" fill="#8fd3fa"/><circle cx="285.9" cy="1634.8" r="3.3" fill="#8fd3fa"/><circle cx="492.0" cy="1661.6" r="3.3" fill="#8fd3fa"/><circle cx="252.6" cy="1619.4" r="3.3" fill="#8fd3fa"/><circle cx="197.5" cy="1641.0" r="3.3" fill="#8fd3fa"/><circle cx="185.2" cy="1622.1" r="3.3" fill="#8fd3fa"/><circle cx="6.6" cy="1650.6" r="3.3" fill="#8fd3fa"/><circle cx="258.0" cy="1642.9" r="3.3" fill="#8fd3fa"/><circle cx="192.9" cy="1603.8" r="3.3" fill="#8fd3fa"/><circle cx="300.8" cy="1646.2" r="3.3" fill="#8fd3fa"/><circle cx="583.1" cy="1610.3" r="3.3" fill="#8fd3fa"/><circle cx="575.1" cy="1653.5" r="3.3" fill="#8fd3fa"/><circle cx="153.5" cy="1614.5" r="3.3" fill="#8fd3fa"/><circle cx="460.1" cy="1607.2" r="3.3" fill="#8fd3fa"/><circle cx="72.3" cy="1627.2" r="3.3" fill="#8fd3fa"/><circle cx="539.1" cy="1636.2" r="3.3" fill="#8fd3fa"/><circle cx="149.4" cy="1654.8" r="3.3" fill="#8fd3fa"/><circle cx="543.7" cy="1618.5" r="3.3" fill="#8fd3fa"/><circle cx="413.1" cy="1643.7" r="3.3" fill="#8fd3fa"/><circle cx="29.3" cy="1613.0" r="3.3" fill="#8fd3fa"/><circle cx="248.9" cy="1649.1" r="3.3" fill="#8fd3fa"/><circle cx="555.2" cy="1611.2" r="3.3" fill="#8fd3fa"/><circle cx="473.6" cy="1646.7" r="3.3" fill="#8fd3fa"/><circle cx="506.2" cy="1612.5" r="3.3" fill="#8fd3fa"/><circle cx="510.1" cy="1610.6" r="3.3" fill="#8fd3fa"/><circle cx="197.5" cy="1637.8" r="3.3" fill="#8fd3fa"/><circle cx="548.2" cy="1642.9" r="3.3" fill="#8fd3fa"/><circle cx="72.1" cy="1627.0" r="3.3" fill="#8fd3fa"/><circle cx="137.3" cy="1641.6" r="3.3" fill="#8fd3fa"/><circle cx="91.4" cy="1615.0" r="3.3" fill="#8fd3fa"/><circle cx="115.5" cy="1608.7" r="3.3" fill="#8fd3fa"/><circle cx="177.1" cy="1629.8" r="3.3" fill="#8fd3fa"/><circle cx="168.1" cy="1652.3" r="3.3" fill="#8fd3fa"/><circle cx="101.2" cy="1640.2" r="3.3" fill="#8fd3fa"/><circle cx="5.8" cy="1631.9" r="3.3" fill="#8fd3fa"/><circle cx="4.2" cy="1625.9" r="3.3" fill="#8fd3fa"/><circle cx="324.0" cy="1651.1" r="3.3" fill="#8fd3fa"/><circle cx="278.4" cy="1621.6" r="3.3" fill="#8fd3fa"/><circle cx="58.4" cy="1659.5" r="3.3" fill="#8fd3fa"/><circle cx="253.0" cy="1654.8" r="3.3" fill="#8fd3fa"/><circle cx="493.3" cy="1640.0" r="3.3" fill="#8fd3fa"/><circle cx="297.5" cy="1634.5" r="3.3" fill="#8fd3fa"/><circle cx="581.5" cy="1649.1" r="3.3" fill="#8fd3fa"/><circle cx="491.9" cy="1631.7" r="3.3" fill="#8fd3fa"/><circle cx="374.7" cy="1650.0" r="3.3" fill="#8fd3fa"/><circle cx="202.5" cy="1635.2" r="3.3" fill="#8fd3fa"/><circle cx="72.5" cy="1609.2" r="3.3" fill="#8fd3fa"/><circle cx="437.3" cy="1611.1" r="3.3" fill="#8fd3fa"/><circle cx="92.5" cy="1626.2" r="3.3" fill="#8fd3fa"/><circle cx="497.2" cy="1612.5" r="3.3" fill="#8fd3fa"/><circle cx="395.3" cy="1656.9" r="3.3" fill="#8fd3fa"/><circle cx="139.6" cy="1627.9" r="3.3" fill="#8fd3fa"/><circle cx="269.3" cy="1628.6" r="3.3" fill="#8fd3fa"/><circle cx="261.2" cy="1619.1" r="3.3" fill="#8fd3fa"/><circle cx="569.2" cy="1626.7" r="3.3" fill="#8fd3fa"/><circle cx="321.6" cy="1660.9" r="3.3" fill="#8fd3fa"/><circle cx="571.5" cy="1625.5" r="3.3" fill="#8fd3fa"/><circle cx="207.9" cy="1629.7" r="3.3" fill="#8fd3fa"/><circle cx="222.8" cy="1599.1" r="3.3" fill="#8fd3fa"/><circle cx="295.2" cy="1638.9" r="3.3" fill="#8fd3fa"/><circle cx="296.3" cy="1622.4" r="3.3" fill="#8fd3fa"/><circle cx="152.7" cy="1600.6" r="3.3" fill="#8fd3fa"/><circle cx="233.5" cy="1613.1" r="3.3" fill="#8fd3fa"/><circle cx="8.4" cy="1607.5" r="3.3" fill="#8fd3fa"/><circle cx="134.0" cy="1629.3" r="3.3" fill="#8fd3fa"/><circle cx="310.9" cy="1644.4" r="3.3" fill="#8fd3fa"/><circle cx="387.6" cy="1651.9" r="3.3" fill="#8fd3fa"/><circle cx="519.8" cy="1650.4" r="3.3" fill="#8fd3fa"/><circle cx="189.7" cy="1634.3" r="3.3" fill="#8fd3fa"/><circle cx="84.2" cy="1661.4" r="3.3" fill="#8fd3fa"/><circle cx="379.0" cy="1650.7" r="3.3" fill="#8fd3fa"/><circle cx="493.7" cy="1607.8" r="3.3" fill="#8fd3fa"/><circle cx="369.5" cy="1657.8" r="3.3" fill="#8fd3fa"/><circle cx="479.9" cy="1651.2" r="3.3" fill="#8fd3fa"/><circle cx="307.7" cy="1617.6" r="3.3" fill="#8fd3fa"/><circle cx="493.5" cy="1640.4" r="3.3" fill="#8fd3fa"/><circle cx="488.4" cy="1654.2" r="3.3" fill="#8fd3fa"/><circle cx="528.0" cy="1644.4" r="3.3" fill="#8fd3fa"/><circle cx="408.9" cy="1648.9" r="3.3" fill="#8fd3fa"/><circle cx="13.6" cy="1624.5" r="3.3" fill="#8fd3fa"/><circle cx="210.3" cy="1617.1" r="3.3" fill="#8fd3fa"/><circle cx="494.0" cy="1614.5" r="3.3" fill="#8fd3fa"/><circle cx="369.8" cy="1643.1" r="3.3" fill="#8fd3fa"/><circle cx="401.4" cy="1646.3" r="3.3" fill="#8fd3fa"/><circle cx="-3.0" cy="1639.7" r="3.3" fill="#8fd3fa"/><circle cx="441.7" cy="1653.9" r="3.3" fill="#8fd3fa"/><circle cx="314.5" cy="1640.4" r="3.3" fill="#8fd3fa"/><circle cx="34.4" cy="1647.8" r="3.3" fill="#8fd3fa"/><circle cx="145.6" cy="1651.3" r="3.3" fill="#8fd3fa"/><circle cx="153.5" cy="1611.5" r="3.3" fill="#8fd3fa"/><circle cx="117.5" cy="1651.0" r="3.3" fill="#8fd3fa"/><circle cx="577.5" cy="1651.4" r="3.3" fill="#8fd3fa"/><circle cx="223.4" cy="1639.9" r="3.3" fill="#8fd3fa"/><circle cx="403.2" cy="1639.2" r="3.3" fill="#8fd3fa"/><circle cx="363.3" cy="1652.6" r="3.3" fill="#8fd3fa"/><circle cx="41.3" cy="1647.1" r="3.3" fill="#8fd3fa"/><circle cx="146.6" cy="1618.3" r="3.3" fill="#8fd3fa"/><circle cx="176.7" cy="1651.6" r="3.3" fill="#8fd3fa"/><circle cx="2.4" cy="1643.6" r="3.3" fill="#8fd3fa"/><circle cx="155.5" cy="1609.9" r="3.3" fill="#8fd3fa"/><circle cx="408.2" cy="1648.4" r="3.3" fill="#8fd3fa"/><circle cx="168.6" cy="1648.6" r="3.3" fill="#8fd3fa"/><circle cx="272.4" cy="1641.1" r="3.3" fill="#8fd3fa"/><circle cx="65.7" cy="1638.5" r="3.3" fill="#8fd3fa"/><circle cx="114.0" cy="1657.8" r="3.3" fill="#8fd3fa"/><circle cx="553.9" cy="1661.2" r="3.3" fill="#8fd3fa"/><circle cx="269.0" cy="1603.7" r="3.3" fill="#8fd3fa"/><circle cx="573.0" cy="1654.8" r="3.3" fill="#8fd3fa"/><circle cx="155.4" cy="1637.6" r="3.3" fill="#8fd3fa"/><circle cx="559.5" cy="1623.1" r="3.3" fill="#8fd3fa"/><circle cx="342.1" cy="1623.1" r="3.3" fill="#8fd3fa"/><circle cx="307.9" cy="1617.8" r="3.3" fill="#8fd3fa"/><circle cx="74.2" cy="1660.2" r="3.3" fill="#8fd3fa"/><circle cx="298.7" cy="1654.8" r="3.3" fill="#8fd3fa"/><circle cx="414.9" cy="1657.6" r="3.3" fill="#8fd3fa"/><circle cx="530.9" cy="1624.6" r="3.3" fill="#8fd3fa"/><circle cx="9.8" cy="1639.5" r="3.3" fill="#8fd3fa"/><circle cx="288.5" cy="1600.2" r="3.3" fill="#8fd3fa"/><circle cx="175.3" cy="1637.7" r="3.3" fill="#8fd3fa"/><circle cx="200.3" cy="1617.7" r="3.3" fill="#8fd3fa"/><circle cx="496.6" cy="1630.1" r="3.3" fill="#8fd3fa"/><circle cx="443.2" cy="1599.4" r="3.3" fill="#8fd3fa"/><circle cx="66.7" cy="1655.6" r="3.3" fill="#8fd3fa"/><circle cx="420.7" cy="1659.1" r="3.3" fill="#8fd3fa"/><circle cx="168.0" cy="1658.1" r="3.3" fill="#8fd3fa"/><circle cx="229.6" cy="1633.4" r="3.3" fill="#8fd3fa"/><circle cx="346.7" cy="1662.0" r="3.3" fill="#8fd3fa"/><circle cx="250.5" cy="1632.7" r="3.3" fill="#8fd3fa"/><circle cx="23.8" cy="1627.5" r="3.3" fill="#8fd3fa"/><circle cx="493.3" cy="1614.2" r="3.3" fill="#8fd3fa"/><circle cx="553.5" cy="1628.2" r="3.3" fill="#8fd3fa"/><circle cx="153.6" cy="1625.8" r="3.3" fill="#8fd3fa"/><circle cx="108.3" cy="1640.8" r="3.3" fill="#8fd3fa"/><circle cx="565.8" cy="1633.4" r="3.3" fill="#8fd3fa"/><circle cx="479.7" cy="1657.4" r="3.3" fill="#8fd3fa"/><circle cx="540.3" cy="1646.5" r="3.3" fill="#8fd3fa"/><circle cx="322.9" cy="1659.7" r="3.3" fill="#8fd3fa"/><circle cx="24.5" cy="1650.5" r="3.3" fill="#8fd3fa"/><circle cx="264.2" cy="1651.1" r="3.3" fill="#8fd3fa"/><circle cx="379.8" cy="1652.0" r="3.3" fill="#8fd3fa"/><circle cx="24.2" cy="1628.2" r="3.3" fill="#8fd3fa"/><circle cx="71.0" cy="1659.1" r="3.3" fill="#8fd3fa"/><circle cx="200.2" cy="1638.8" r="3.3" fill="#8fd3fa"/><circle cx="436.2" cy="1628.9" r="3.3" fill="#8fd3fa"/><circle cx="150.3" cy="1661.1" r="3.3" fill="#8fd3fa"/><circle cx="174.6" cy="1647.7" r="3.3" fill="#8fd3fa"/><circle cx="230.4" cy="1643.1" r="3.3" fill="#8fd3fa"/><circle cx="91.5" cy="1619.9" r="3.3" fill="#8fd3fa"/><circle cx="535.9" cy="1622.9" r="3.3" fill="#8fd3fa"/><circle cx="126.4" cy="1640.1" r="3.3" fill="#8fd3fa"/><circle cx="589.9" cy="1658.3" r="3.3" fill="#8fd3fa"/><circle cx="78.3" cy="1637.6" r="3.3" fill="#8fd3fa"/><circle cx="49.2" cy="1621.8" r="3.3" fill="#8fd3fa"/><circle cx="49.4" cy="1631.6" r="3.3" fill="#8fd3fa"/><circle cx="149.2" cy="1625.1" r="3.3" fill="#8fd3fa"/><circle cx="524.7" cy="1643.7" r="3.3" fill="#8fd3fa"/><circle cx="241.4" cy="1651.8" r="3.3" fill="#8fd3fa"/><circle cx="307.9" cy="1635.7" r="3.3" fill="#8fd3fa"/><circle cx="196.9" cy="1633.6" r="3.3" fill="#8fd3fa"/><circle cx="160.7" cy="1610.1" r="3.3" fill="#8fd3fa"/><circle cx="70.1" cy="1660.8" r="3.3" fill="#8fd3fa"/><circle cx="370.9" cy="1640.4" r="3.3" fill="#8fd3fa"/><circle cx="123.9" cy="1656.6" r="3.3" fill="#8fd3fa"/><circle cx="143.3" cy="1627.2" r="3.3" fill="#8fd3fa"/><circle cx="261.2" cy="1634.9" r="3.3" fill="#8fd3fa"/><circle cx="501.7" cy="1660.2" r="3.3" fill="#8fd3fa"/><circle cx="8.0" cy="1657.0" r="3.3" fill="#8fd3fa"/><circle cx="418.6" cy="1606.2" r="3.3" fill="#8fd3fa"/><circle cx="277.5" cy="1657.9" r="3.3" fill="#8fd3fa"/><circle cx="-4.9" cy="1644.5" r="3.3" fill="#8fd3fa"/><circle cx="548.3" cy="1634.5" r="3.3" fill="#8fd3fa"/><circle cx="505.7" cy="1655.0" r="3.3" fill="#8fd3fa"/><circle cx="143.3" cy="1660.9" r="3.3" fill="#8fd3fa"/><circle cx="87.2" cy="1614.9" r="3.3" fill="#8fd3fa"/><circle cx="402.2" cy="1641.3" r="3.3" fill="#8fd3fa"/><circle cx="425.9" cy="1659.7" r="3.3" fill="#8fd3fa"/><circle cx="451.6" cy="1647.3" r="3.3" fill="#8fd3fa"/><circle cx="324.2" cy="1638.0" r="3.3" fill="#8fd3fa"/><circle cx="462.0" cy="1607.2" r="3.3" fill="#8fd3fa"/><circle cx="544.2" cy="1624.7" r="3.3" fill="#8fd3fa"/><circle cx="176.4" cy="1647.2" r="3.3" fill="#8fd3fa"/><circle cx="145.3" cy="1616.6" r="3.3" fill="#8fd3fa"/><circle cx="412.1" cy="1646.8" r="3.3" fill="#8fd3fa"/><circle cx="37.0" cy="1615.2" r="3.3" fill="#8fd3fa"/><circle cx="343.0" cy="1641.5" r="3.3" fill="#8fd3fa"/><circle cx="128.5" cy="1634.3" r="3.3" fill="#8fd3fa"/><circle cx="1.2" cy="1645.2" r="3.3" fill="#8fd3fa"/><circle cx="270.0" cy="1629.2" r="3.3" fill="#8fd3fa"/><circle cx="379.8" cy="1660.4" r="3.3" fill="#8fd3fa"/><circle cx="278.8" cy="1657.4" r="3.3" fill="#8fd3fa"/><circle cx="142.5" cy="1624.8" r="3.3" fill="#8fd3fa"/><circle cx="415.7" cy="1660.5" r="3.3" fill="#8fd3fa"/><circle cx="8.0" cy="1629.5" r="3.3" fill="#8fd3fa"/><circle cx="397.7" cy="1640.1" r="3.3" fill="#8fd3fa"/><circle cx="148.6" cy="1636.0" r="3.3" fill="#8fd3fa"/><circle cx="547.3" cy="1648.2" r="3.3" fill="#8fd3fa"/><circle cx="15.4" cy="1624.3" r="3.3" fill="#8fd3fa"/><circle cx="246.1" cy="1631.4" r="3.3" fill="#8fd3fa"/><circle cx="113.3" cy="1648.9" r="3.3" fill="#8fd3fa"/><circle cx="436.3" cy="1653.9" r="3.3" fill="#8fd3fa"/><circle cx="117.5" cy="1640.5" r="3.3" fill="#8fd3fa"/><circle cx="181.1" cy="1660.8" r="3.3" fill="#8fd3fa"/><circle cx="132.8" cy="1654.8" r="3.3" fill="#8fd3fa"/><circle cx="449.0" cy="1623.9" r="3.3" fill="#8fd3fa"/><circle cx="563.3" cy="1628.8" r="3.3" fill="#8fd3fa"/><circle cx="106.8" cy="1640.0" r="3.3" fill="#8fd3fa"/><circle cx="244.0" cy="1624.0" r="3.3" fill="#8fd3fa"/><circle cx="561.4" cy="1648.1" r="3.3" fill="#8fd3fa"/><circle cx="229.9" cy="1618.2" r="3.3" fill="#8fd3fa"/><circle cx="576.5" cy="1623.3" r="3.3" fill="#8fd3fa"/><circle cx="25.9" cy="1617.8" r="3.3" fill="#8fd3fa"/><circle cx="229.8" cy="1609.8" r="3.3" fill="#8fd3fa"/><circle cx="522.5" cy="1658.0" r="3.3" fill="#8fd3fa"/><circle cx="590.5" cy="1651.1" r="3.3" fill="#8fd3fa"/><circle cx="191.6" cy="1659.3" r="3.3" fill="#8fd3fa"/><circle cx="553.7" cy="1621.3" r="3.3" fill="#8fd3fa"/><circle cx="14.0" cy="1651.7" r="3.3" fill="#8fd3fa"/><circle cx="221.0" cy="1648.1" r="3.3" fill="#8fd3fa"/><circle cx="193.0" cy="1633.5" r="3.3" fill="#8fd3fa"/><circle cx="-3.3" cy="1620.0" r="3.3" fill="#8fd3fa"/><circle cx="204.8" cy="1627.8" r="3.3" fill="#8fd3fa"/><circle cx="68.9" cy="1660.3" r="3.3" fill="#8fd3fa"/><circle cx="118.8" cy="1660.6" r="3.3" fill="#8fd3fa"/><circle cx="485.5" cy="1632.5" r="3.3" fill="#8fd3fa"/><circle cx="253.2" cy="1654.9" r="3.3" fill="#8fd3fa"/><circle cx="277.7" cy="1608.5" r="3.3" fill="#8fd3fa"/><circle cx="543.9" cy="1633.4" r="3.3" fill="#8fd3fa"/><circle cx="212.5" cy="1621.9" r="3.3" fill="#8fd3fa"/><circle cx="13.1" cy="1658.0" r="3.3" fill="#8fd3fa"/><circle cx="479.7" cy="1635.5" r="3.3" fill="#8fd3fa"/><circle cx="19.3" cy="1652.6" r="3.3" fill="#8fd3fa"/><circle cx="32.4" cy="1606.5" r="3.3" fill="#8fd3fa"/><circle cx="148.4" cy="1658.9" r="3.3" fill="#8fd3fa"/><circle cx="531.4" cy="1651.7" r="3.3" fill="#8fd3fa"/><circle cx="157.6" cy="1631.4" r="3.3" fill="#8fd3fa"/><circle cx="363.3" cy="1660.4" r="3.3" fill="#8fd3fa"/><circle cx="422.8" cy="1626.7" r="3.3" fill="#8fd3fa"/><circle cx="159.6" cy="1630.1" r="3.3" fill="#8fd3fa"/><circle cx="446.1" cy="1600.2" r="3.3" fill="#8fd3fa"/><circle cx="373.5" cy="1658.7" r="3.3" fill="#8fd3fa"/><circle cx="9.5" cy="1659.8" r="3.3" fill="#8fd3fa"/><circle cx="278.7" cy="1624.8" r="3.3" fill="#8fd3fa"/><circle cx="564.5" cy="1660.3" r="3.3" fill="#8fd3fa"/><circle cx="144.9" cy="1634.2" r="3.3" fill="#8fd3fa"/><circle cx="289.6" cy="1636.6" r="3.3" fill="#8fd3fa"/><circle cx="104.2" cy="1659.2" r="3.3" fill="#8fd3fa"/><circle cx="435.9" cy="1654.1" r="3.3" fill="#8fd3fa"/><circle cx="456.4" cy="1654.9" r="3.3" fill="#8fd3fa"/><circle cx="190.7" cy="1645.4" r="3.3" fill="#8fd3fa"/><circle cx="211.0" cy="1630.3" r="3.3" fill="#8fd3fa"/><circle cx="42.2" cy="1653.2" r="3.3" fill="#8fd3fa"/><circle cx="444.5" cy="1622.2" r="3.3" fill="#8fd3fa"/><circle cx="33.6" cy="1625.7" r="3.3" fill="#8fd3fa"/><circle cx="324.9" cy="1606.4" r="3.3" fill="#8fd3fa"/><circle cx="580.2" cy="1630.7" r="3.3" fill="#8fd3fa"/><circle cx="584.7" cy="1657.4" r="3.3" fill="#8fd3fa"/><circle cx="45.2" cy="1626.8" r="3.3" fill="#8fd3fa"/><circle cx="292.6" cy="1613.7" r="3.3" fill="#8fd3fa"/><circle cx="261.8" cy="1650.1" r="3.3" fill="#8fd3fa"/><circle cx="243.9" cy="1624.8" r="3.3" fill="#8fd3fa"/><circle cx="397.4" cy="1646.1" r="3.3" fill="#8fd3fa"/><circle cx="500.7" cy="1651.8" r="3.3" fill="#8fd3fa"/><circle cx="67.3" cy="1648.1" r="3.3" fill="#8fd3fa"/><circle cx="170.4" cy="1655.7" r="3.3" fill="#8fd3fa"/><circle cx="217.7" cy="1643.5" r="3.3" fill="#8fd3fa"/><circle cx="113.9" cy="1651.3" r="3.3" fill="#8fd3fa"/><circle cx="141.5" cy="1625.7" r="3.3" fill="#8fd3fa"/><circle cx="522.8" cy="1618.8" r="3.3" fill="#8fd3fa"/><circle cx="189.8" cy="1644.1" r="3.3" fill="#8fd3fa"/><circle cx="587.5" cy="1634.7" r="3.3" fill="#8fd3fa"/><circle cx="133.1" cy="1640.6" r="3.3" fill="#8fd3fa"/><circle cx="385.0" cy="1654.3" r="3.3" fill="#8fd3fa"/><circle cx="56.1" cy="1661.7" r="3.3" fill="#8fd3fa"/><circle cx="484.0" cy="1638.9" r="3.3" fill="#8fd3fa"/><circle cx="540.9" cy="1655.7" r="3.3" fill="#8fd3fa"/><circle cx="170.3" cy="1607.3" r="3.3" fill="#8fd3fa"/><circle cx="108.2" cy="1615.9" r="3.3" fill="#8fd3fa"/><circle cx="343.2" cy="1661.0" r="3.3" fill="#8fd3fa"/><circle cx="217.2" cy="1659.3" r="3.3" fill="#8fd3fa"/><circle cx="263.1" cy="1656.7" r="3.3" fill="#8fd3fa"/><circle cx="459.3" cy="1626.5" r="3.3" fill="#8fd3fa"/><circle cx="58.2" cy="1659.9" r="3.3" fill="#8fd3fa"/><circle cx="365.1" cy="1644.9" r="3.3" fill="#8fd3fa"/><circle cx="215.1" cy="1623.6" r="3.3" fill="#8fd3fa"/><circle cx="116.8" cy="1617.8" r="3.3" fill="#8fd3fa"/><circle cx="352.9" cy="1626.2" r="3.3" fill="#8fd3fa"/><circle cx="116.5" cy="1647.5" r="3.3" fill="#8fd3fa"/><circle cx="190.4" cy="1602.4" r="3.3" fill="#8fd3fa"/><circle cx="105.5" cy="1648.7" r="3.3" fill="#8fd3fa"/><circle cx="116.4" cy="1629.8" r="3.3" fill="#8fd3fa"/><circle cx="322.2" cy="1653.8" r="3.3" fill="#8fd3fa"/><circle cx="55.5" cy="1610.2" r="3.3" fill="#8fd3fa"/><circle cx="323.4" cy="1634.7" r="3.3" fill="#8fd3fa"/><circle cx="49.4" cy="1646.9" r="3.3" fill="#8fd3fa"/><circle cx="410.2" cy="1619.6" r="3.3" fill="#8fd3fa"/><circle cx="164.1" cy="1635.5" r="3.3" fill="#8fd3fa"/><circle cx="564.1" cy="1629.5" r="3.3" fill="#8fd3fa"/><circle cx="333.2" cy="1629.8" r="3.3" fill="#8fd3fa"/><circle cx="243.6" cy="1632.5" r="3.3" fill="#8fd3fa"/><circle cx="590.0" cy="1656.6" r="3.3" fill="#8fd3fa"/><circle cx="112.7" cy="1632.9" r="3.3" fill="#8fd3fa"/><circle cx="116.6" cy="1650.9" r="3.3" fill="#8fd3fa"/><circle cx="533.3" cy="1600.9" r="3.3" fill="#8fd3fa"/><circle cx="484.8" cy="1636.2" r="3.3" fill="#8fd3fa"/><circle cx="522.1" cy="1635.3" r="3.3" fill="#8fd3fa"/><circle cx="92.0" cy="1638.2" r="3.3" fill="#8fd3fa"/><circle cx="324.3" cy="1603.1" r="3.3" fill="#8fd3fa"/><circle cx="538.1" cy="1647.0" r="3.3" fill="#8fd3fa"/><circle cx="366.5" cy="1613.0" r="3.3" fill="#8fd3fa"/><circle cx="296.2" cy="1633.3" r="3.3" fill="#8fd3fa"/><circle cx="164.1" cy="1618.2" r="3.3" fill="#8fd3fa"/><circle cx="547.5" cy="1641.3" r="3.3" fill="#8fd3fa"/><circle cx="287.8" cy="1614.9" r="3.3" fill="#8fd3fa"/><circle cx="572.2" cy="1654.2" r="3.3" fill="#8fd3fa"/><circle cx="70.6" cy="1622.2" r="3.3" fill="#8fd3fa"/><circle cx="577.4" cy="1659.8" r="3.3" fill="#8fd3fa"/><circle cx="26.9" cy="1639.3" r="3.3" fill="#8fd3fa"/><circle cx="226.6" cy="1659.1" r="3.3" fill="#8fd3fa"/><circle cx="365.3" cy="1658.2" r="3.3" fill="#8fd3fa"/><circle cx="90.7" cy="1655.0" r="3.3" fill="#8fd3fa"/><circle cx="127.6" cy="1653.4" r="3.3" fill="#8fd3fa"/><circle cx="500.3" cy="1635.2" r="3.3" fill="#8fd3fa"/><circle cx="104.2" cy="1655.2" r="3.3" fill="#8fd3fa"/><circle cx="233.6" cy="1623.7" r="3.3" fill="#8fd3fa"/><circle cx="224.0" cy="1641.1" r="3.3" fill="#8fd3fa"/><circle cx="142.5" cy="1616.2" r="3.3" fill="#8fd3fa"/><circle cx="530.7" cy="1650.8" r="3.3" fill="#8fd3fa"/><circle cx="330.7" cy="1607.4" r="3.3" fill="#8fd3fa"/><circle cx="17.8" cy="1652.2" r="3.3" fill="#8fd3fa"/><circle cx="65.3" cy="1655.6" r="3.3" fill="#8fd3fa"/><circle cx="323.4" cy="1645.1" r="3.3" fill="#8fd3fa"/><circle cx="177.8" cy="1646.4" r="3.3" fill="#8fd3fa"/><circle cx="342.8" cy="1636.0" r="3.3" fill="#8fd3fa"/><circle cx="388.3" cy="1636.3" r="3.3" fill="#8fd3fa"/><circle cx="256.7" cy="1637.5" r="3.3" fill="#8fd3fa"/><circle cx="364.5" cy="1604.7" r="3.3" fill="#8fd3fa"/><circle cx="135.4" cy="1639.7" r="3.3" fill="#8fd3fa"/><circle cx="460.6" cy="1652.4" r="3.3" fill="#8fd3fa"/><circle cx="102.2" cy="1638.1" r="3.3" fill="#8fd3fa"/><circle cx="58.9" cy="1638.9" r="3.3" fill="#8fd3fa"/><circle cx="252.1" cy="1616.7" r="3.3" fill="#8fd3fa"/><circle cx="258.9" cy="1613.3" r="3.3" fill="#8fd3fa"/><circle cx="19.3" cy="1640.7" r="3.3" fill="#8fd3fa"/><circle cx="44.1" cy="1646.8" r="3.3" fill="#8fd3fa"/><circle cx="459.2" cy="1651.1" r="3.3" fill="#8fd3fa"/><circle cx="27.4" cy="1640.8" r="3.3" fill="#8fd3fa"/><circle cx="220.6" cy="1640.4" r="3.3" fill="#8fd3fa"/><circle cx="76.3" cy="1660.1" r="3.3" fill="#8fd3fa"/><circle cx="589.7" cy="1656.3" r="3.3" fill="#8fd3fa"/><circle cx="481.5" cy="1651.1" r="3.3" fill="#8fd3fa"/><circle cx="581.1" cy="1621.9" r="3.3" fill="#8fd3fa"/><circle cx="566.1" cy="1639.8" r="3.3" fill="#8fd3fa"/><circle cx="93.6" cy="1658.7" r="3.3" fill="#8fd3fa"/><circle cx="550.6" cy="1653.5" r="3.3" fill="#8fd3fa"/><circle cx="204.5" cy="1610.5" r="3.3" fill="#8fd3fa"/><circle cx="89.8" cy="1652.1" r="3.3" fill="#8fd3fa"/><circle cx="159.2" cy="1657.9" r="3.3" fill="#8fd3fa"/><circle cx="80.7" cy="1654.6" r="3.3" fill="#8fd3fa"/><circle cx="544.2" cy="1640.3" r="3.3" fill="#8fd3fa"/><circle cx="151.9" cy="1623.0" r="3.3" fill="#8fd3fa"/><circle cx="185.5" cy="1640.5" r="3.3" fill="#8fd3fa"/><circle cx="103.7" cy="1606.8" r="3.3" fill="#8fd3fa"/><circle cx="554.0" cy="1619.4" r="3.3" fill="#8fd3fa"/><circle cx="529.6" cy="1648.8" r="3.3" fill="#8fd3fa"/><circle cx="463.6" cy="1620.0" r="3.3" fill="#8fd3fa"/><circle cx="311.8" cy="1615.5" r="3.3" fill="#8fd3fa"/><circle cx="209.8" cy="1646.8" r="3.3" fill="#8fd3fa"/><circle cx="326.4" cy="1657.0" r="3.3" fill="#8fd3fa"/><circle cx="521.9" cy="1644.2" r="3.3" fill="#8fd3fa"/><circle cx="587.8" cy="1614.5" r="3.3" fill="#8fd3fa"/><circle cx="230.4" cy="1646.5" r="3.3" fill="#8fd3fa"/><circle cx="153.1" cy="1653.9" r="3.3" fill="#8fd3fa"/><circle cx="339.7" cy="1661.6" r="3.3" fill="#8fd3fa"/><circle cx="451.5" cy="1632.7" r="3.3" fill="#8fd3fa"/><circle cx="100.5" cy="1637.2" r="3.3" fill="#8fd3fa"/><circle cx="23.8" cy="1651.6" r="3.3" fill="#8fd3fa"/><circle cx="146.4" cy="1654.8" r="3.3" fill="#8fd3fa"/><circle cx="582.5" cy="1646.9" r="3.3" fill="#8fd3fa"/><circle cx="391.2" cy="1644.4" r="3.3" fill="#8fd3fa"/><circle cx="-3.9" cy="1629.9" r="3.3" fill="#8fd3fa"/><circle cx="84.2" cy="1606.4" r="3.3" fill="#8fd3fa"/><circle cx="253.0" cy="1645.9" r="3.3" fill="#8fd3fa"/><circle cx="529.6" cy="1640.9" r="3.3" fill="#8fd3fa"/><circle cx="130.7" cy="1617.0" r="3.3" fill="#8fd3fa"/><circle cx="8.3" cy="1647.6" r="3.3" fill="#8fd3fa"/><circle cx="206.9" cy="1599.8" r="3.3" fill="#8fd3fa"/><circle cx="208.2" cy="1614.7" r="3.3" fill="#8fd3fa"/><circle cx="343.4" cy="1624.1" r="3.3" fill="#8fd3fa"/><circle cx="116.9" cy="1644.6" r="3.3" fill="#8fd3fa"/><circle cx="278.5" cy="1646.2" r="3.3" fill="#8fd3fa"/><circle cx="554.1" cy="1617.2" r="3.3" fill="#8fd3fa"/><circle cx="84.1" cy="1625.4" r="3.3" fill="#8fd3fa"/><circle cx="376.0" cy="1613.7" r="3.3" fill="#8fd3fa"/><circle cx="461.9" cy="1656.9" r="3.3" fill="#8fd3fa"/><circle cx="152.8" cy="1635.0" r="3.3" fill="#8fd3fa"/><circle cx="380.0" cy="1602.4" r="3.3" fill="#8fd3fa"/><circle cx="204.1" cy="1643.3" r="3.3" fill="#8fd3fa"/><circle cx="259.9" cy="1647.2" r="3.3" fill="#8fd3fa"/><circle cx="432.9" cy="1659.6" r="3.3" fill="#8fd3fa"/><circle cx="534.4" cy="1625.8" r="3.3" fill="#8fd3fa"/><circle cx="312.3" cy="1607.8" r="3.3" fill="#8fd3fa"/><circle cx="136.9" cy="1635.3" r="3.3" fill="#8fd3fa"/><circle cx="460.0" cy="1609.6" r="3.3" fill="#8fd3fa"/><circle cx="323.9" cy="1602.6" r="3.3" fill="#8fd3fa"/><circle cx="79.9" cy="1659.7" r="3.3" fill="#8fd3fa"/><circle cx="358.0" cy="1622.3" r="3.3" fill="#8fd3fa"/><circle cx="378.0" cy="1640.6" r="3.3" fill="#8fd3fa"/><circle cx="99.3" cy="1654.5" r="3.3" fill="#8fd3fa"/><circle cx="174.3" cy="1629.7" r="3.3" fill="#8fd3fa"/><circle cx="525.9" cy="1608.4" r="3.3" fill="#8fd3fa"/><circle cx="422.1" cy="1653.3" r="3.3" fill="#8fd3fa"/><circle cx="499.1" cy="1601.1" r="3.3" fill="#8fd3fa"/><circle cx="272.8" cy="1651.6" r="3.3" fill="#8fd3fa"/><circle cx="265.1" cy="1651.5" r="3.3" fill="#8fd3fa"/><circle cx="57.9" cy="1624.2" r="3.3" fill="#8fd3fa"/><circle cx="18.2" cy="1624.7" r="3.3" fill="#8fd3fa"/><circle cx="442.5" cy="1631.2" r="3.3" fill="#8fd3fa"/><circle cx="499.7" cy="1649.5" r="3.3" fill="#8fd3fa"/><circle cx="153.8" cy="1650.2" r="3.3" fill="#8fd3fa"/><circle cx="255.3" cy="1642.9" r="3.3" fill="#8fd3fa"/><circle cx="307.4" cy="1653.5" r="3.3" fill="#8fd3fa"/><circle cx="378.3" cy="1626.9" r="3.3" fill="#8fd3fa"/><circle cx="124.5" cy="1660.7" r="3.3" fill="#8fd3fa"/><circle cx="4.1" cy="1657.3" r="3.3" fill="#8fd3fa"/><circle cx="136.0" cy="1626.5" r="3.3" fill="#8fd3fa"/><circle cx="559.0" cy="1651.6" r="3.3" fill="#8fd3fa"/><circle cx="190.1" cy="1651.7" r="3.3" fill="#8fd3fa"/><circle cx="191.1" cy="1657.3" r="3.3" fill="#8fd3fa"/><circle cx="536.8" cy="1625.1" r="3.3" fill="#8fd3fa"/><circle cx="408.6" cy="1646.5" r="3.3" fill="#8fd3fa"/><circle cx="579.5" cy="1648.1" r="3.3" fill="#8fd3fa"/><circle cx="496.3" cy="1638.7" r="3.3" fill="#8fd3fa"/><circle cx="506.9" cy="1649.6" r="3.3" fill="#8fd3fa"/><circle cx="427.6" cy="1637.0" r="3.3" fill="#8fd3fa"/><circle cx="178.7" cy="1643.7" r="3.3" fill="#8fd3fa"/><circle cx="366.7" cy="1623.2" r="3.3" fill="#8fd3fa"/><circle cx="538.7" cy="1611.8" r="3.3" fill="#8fd3fa"/><circle cx="11.1" cy="1618.1" r="3.3" fill="#8fd3fa"/><circle cx="549.6" cy="1614.7" r="3.3" fill="#8fd3fa"/><circle cx="79.7" cy="1631.8" r="3.3" fill="#8fd3fa"/><circle cx="19.9" cy="1605.6" r="3.3" fill="#8fd3fa"/><circle cx="373.4" cy="1649.3" r="3.3" fill="#8fd3fa"/><circle cx="434.9" cy="1649.5" r="3.3" fill="#8fd3fa"/><circle cx="347.5" cy="1610.5" r="3.3" fill="#8fd3fa"/><circle cx="483.1" cy="1632.9" r="3.3" fill="#8fd3fa"/><circle cx="527.1" cy="1654.8" r="3.3" fill="#8fd3fa"/><circle cx="513.1" cy="1610.5" r="3.3" fill="#8fd3fa"/><circle cx="558.8" cy="1658.7" r="3.3" fill="#8fd3fa"/><circle cx="117.8" cy="1614.8" r="3.3" fill="#8fd3fa"/><circle cx="15.6" cy="1615.2" r="3.3" fill="#8fd3fa"/><circle cx="479.8" cy="1656.0" r="3.3" fill="#8fd3fa"/><circle cx="487.6" cy="1646.7" r="3.3" fill="#8fd3fa"/><circle cx="166.6" cy="1646.6" r="3.3" fill="#8fd3fa"/><circle cx="53.4" cy="1614.1" r="3.3" fill="#8fd3fa"/><circle cx="117.4" cy="1652.2" r="3.3" fill="#8fd3fa"/><circle cx="248.0" cy="1630.3" r="3.3" fill="#8fd3fa"/><circle cx="148.3" cy="1604.3" r="3.3" fill="#8fd3fa"/><circle cx="422.3" cy="1628.0" r="3.3" fill="#8fd3fa"/><circle cx="186.5" cy="1633.1" r="3.3" fill="#8fd3fa"/><circle cx="295.7" cy="1660.6" r="3.3" fill="#8fd3fa"/><circle cx="364.1" cy="1656.1" r="3.3" fill="#8fd3fa"/><circle cx="241.5" cy="1606.0" r="3.3" fill="#8fd3fa"/><circle cx="456.5" cy="1636.9" r="3.3" fill="#8fd3fa"/><circle cx="415.7" cy="1631.9" r="3.3" fill="#8fd3fa"/><circle cx="124.3" cy="1642.1" r="3.3" fill="#8fd3fa"/><circle cx="49.3" cy="1656.6" r="3.3" fill="#8fd3fa"/><circle cx="96.7" cy="1654.8" r="3.3" fill="#8fd3fa"/><circle cx="115.6" cy="1599.2" r="3.3" fill="#8fd3fa"/><circle cx="578.8" cy="1652.4" r="3.3" fill="#8fd3fa"/><circle cx="288.0" cy="1600.5" r="3.3" fill="#8fd3fa"/><circle cx="470.7" cy="1639.8" r="3.3" fill="#8fd3fa"/><circle cx="290.3" cy="1621.2" r="3.3" fill="#8fd3fa"/><circle cx="491.6" cy="1631.9" r="3.3" fill="#8fd3fa"/><circle cx="558.5" cy="1626.6" r="3.3" fill="#8fd3fa"/><circle cx="123.2" cy="1628.1" r="3.3" fill="#8fd3fa"/><circle cx="292.5" cy="1649.6" r="3.3" fill="#8fd3fa"/><circle cx="375.0" cy="1615.0" r="3.3" fill="#8fd3fa"/><circle cx="465.4" cy="1612.2" r="3.3" fill="#8fd3fa"/><circle cx="464.8" cy="1649.5" r="3.3" fill="#8fd3fa"/><circle cx="207.3" cy="1646.4" r="3.3" fill="#8fd3fa"/><circle cx="230.6" cy="1635.0" r="3.3" fill="#8fd3fa"/><circle cx="46.4" cy="1657.7" r="3.3" fill="#8fd3fa"/><circle cx="10.0" cy="1657.6" r="3.3" fill="#8fd3fa"/><circle cx="152.1" cy="1622.8" r="3.3" fill="#8fd3fa"/><circle cx="294.2" cy="1658.1" r="3.3" fill="#8fd3fa"/><circle cx="522.7" cy="1633.8" r="3.3" fill="#8fd3fa"/><circle cx="270.2" cy="1624.7" r="3.3" fill="#8fd3fa"/><circle cx="445.4" cy="1641.8" r="3.3" fill="#8fd3fa"/><circle cx="380.8" cy="1652.0" r="3.3" fill="#8fd3fa"/><circle cx="190.0" cy="1632.0" r="3.3" fill="#8fd3fa"/><circle cx="498.3" cy="1618.9" r="3.3" fill="#8fd3fa"/><circle cx="438.0" cy="1648.0" r="3.3" fill="#8fd3fa"/><circle cx="257.0" cy="1620.1" r="3.3" fill="#8fd3fa"/><circle cx="340.8" cy="1652.9" r="3.3" fill="#8fd3fa"/><circle cx="270.8" cy="1616.5" r="3.3" fill="#8fd3fa"/><circle cx="137.1" cy="1657.5" r="3.3" fill="#8fd3fa"/><circle cx="175.0" cy="1621.7" r="3.3" fill="#8fd3fa"/><circle cx="498.7" cy="1649.8" r="3.3" fill="#8fd3fa"/><circle cx="88.1" cy="1618.9" r="3.3" fill="#8fd3fa"/><circle cx="190.0" cy="1625.7" r="3.3" fill="#8fd3fa"/><circle cx="91.1" cy="1641.3" r="3.3" fill="#8fd3fa"/><circle cx="108.0" cy="1630.8" r="3.3" fill="#8fd3fa"/><circle cx="430.1" cy="1661.0" r="3.3" fill="#8fd3fa"/><circle cx="569.5" cy="1614.2" r="3.3" fill="#8fd3fa"/><circle cx="224.4" cy="1614.2" r="3.3" fill="#8fd3fa"/><circle cx="469.5" cy="1661.4" r="3.3" fill="#8fd3fa"/><circle cx="254.6" cy="1651.1" r="3.3" fill="#8fd3fa"/><circle cx="375.9" cy="1622.1" r="3.3" fill="#8fd3fa"/><circle cx="118.2" cy="1614.7" r="3.3" fill="#8fd3fa"/><circle cx="15.3" cy="1634.3" r="3.3" fill="#8fd3fa"/><circle cx="467.2" cy="1634.9" r="3.3" fill="#8fd3fa"/><circle cx="293.8" cy="1649.4" r="3.3" fill="#8fd3fa"/><circle cx="271.6" cy="1646.6" r="3.3" fill="#8fd3fa"/><circle cx="355.4" cy="1617.8" r="3.3" fill="#8fd3fa"/><circle cx="437.3" cy="1635.2" r="3.3" fill="#8fd3fa"/><circle cx="251.7" cy="1658.4" r="3.3" fill="#8fd3fa"/><circle cx="442.2" cy="1643.9" r="3.3" fill="#8fd3fa"/><circle cx="131.5" cy="1636.1" r="3.3" fill="#8fd3fa"/><circle cx="520.4" cy="1650.6" r="3.3" fill="#8fd3fa"/><circle cx="412.9" cy="1652.9" r="3.3" fill="#8fd3fa"/><circle cx="400.7" cy="1656.2" r="3.3" fill="#8fd3fa"/><circle cx="266.0" cy="1647.0" r="3.3" fill="#8fd3fa"/><circle cx="370.1" cy="1629.9" r="3.3" fill="#8fd3fa"/><circle cx="245.5" cy="1613.9" r="3.3" fill="#8fd3fa"/><circle cx="420.8" cy="1653.2" r="3.3" fill="#8fd3fa"/><circle cx="144.3" cy="1646.5" r="3.3" fill="#8fd3fa"/><circle cx="266.8" cy="1636.2" r="3.3" fill="#8fd3fa"/><circle cx="239.4" cy="1646.1" r="3.3" fill="#8fd3fa"/><circle cx="550.3" cy="1648.6" r="3.3" fill="#8fd3fa"/><circle cx="385.7" cy="1621.1" r="3.3" fill="#8fd3fa"/><circle cx="227.1" cy="1653.1" r="3.3" fill="#8fd3fa"/><circle cx="576.8" cy="1639.7" r="3.3" fill="#8fd3fa"/><circle cx="319.4" cy="1607.0" r="3.3" fill="#8fd3fa"/><circle cx="461.7" cy="1619.4" r="3.3" fill="#8fd3fa"/><circle cx="305.0" cy="1659.7" r="3.3" fill="#8fd3fa"/><circle cx="338.0" cy="1614.2" r="3.3" fill="#8fd3fa"/><circle cx="423.2" cy="1642.3" r="3.3" fill="#8fd3fa"/><circle cx="376.6" cy="1640.8" r="3.3" fill="#8fd3fa"/><circle cx="306.4" cy="1655.2" r="3.3" fill="#8fd3fa"/><circle cx="560.9" cy="1635.5" r="3.3" fill="#8fd3fa"/><circle cx="403.6" cy="1623.1" r="3.3" fill="#8fd3fa"/><circle cx="450.3" cy="1634.5" r="3.3" fill="#8fd3fa"/><circle cx="582.7" cy="1616.1" r="3.3" fill="#8fd3fa"/><circle cx="28.8" cy="1632.4" r="3.3" fill="#8fd3fa"/><circle cx="233.6" cy="1627.5" r="3.3" fill="#8fd3fa"/><circle cx="244.9" cy="1602.8" r="3.3" fill="#8fd3fa"/><circle cx="411.9" cy="1636.1" r="3.3" fill="#8fd3fa"/><circle cx="153.3" cy="1632.2" r="3.3" fill="#8fd3fa"/><circle cx="437.7" cy="1624.1" r="3.3" fill="#8fd3fa"/><circle cx="309.7" cy="1659.7" r="3.3" fill="#8fd3fa"/><circle cx="473.5" cy="1623.7" r="3.3" fill="#8fd3fa"/><circle cx="121.6" cy="1634.5" r="3.3" fill="#8fd3fa"/><circle cx="458.6" cy="1616.8" r="3.3" fill="#8fd3fa"/><circle cx="373.7" cy="1654.4" r="3.3" fill="#8fd3fa"/><circle cx="330.5" cy="1638.6" r="3.3" fill="#8fd3fa"/><circle cx="570.4" cy="1624.2" r="3.3" fill="#8fd3fa"/><circle cx="376.4" cy="1632.3" r="3.3" fill="#8fd3fa"/><circle cx="482.3" cy="1654.8" r="3.3" fill="#8fd3fa"/><circle cx="170.7" cy="1638.6" r="3.3" fill="#8fd3fa"/><circle cx="69.7" cy="1642.6" r="3.3" fill="#8fd3fa"/><circle cx="206.8" cy="1655.4" r="3.3" fill="#8fd3fa"/><circle cx="154.7" cy="1656.1" r="3.3" fill="#8fd3fa"/><circle cx="146.4" cy="1633.6" r="3.3" fill="#8fd3fa"/><circle cx="106.0" cy="1636.4" r="3.3" fill="#8fd3fa"/><circle cx="425.9" cy="1599.8" r="3.3" fill="#8fd3fa"/><circle cx="141.2" cy="1627.9" r="3.3" fill="#8fd3fa"/><circle cx="281.3" cy="1629.2" r="3.3" fill="#8fd3fa"/><circle cx="375.5" cy="1636.5" r="3.3" fill="#8fd3fa"/><circle cx="211.4" cy="1647.8" r="3.3" fill="#8fd3fa"/><circle cx="505.1" cy="1659.2" r="3.3" fill="#8fd3fa"/><circle cx="489.3" cy="1609.5" r="3.3" fill="#8fd3fa"/><circle cx="463.1" cy="1658.3" r="3.3" fill="#8fd3fa"/><circle cx="491.3" cy="1617.7" r="3.3" fill="#8fd3fa"/><circle cx="3.9" cy="1646.7" r="3.3" fill="#8fd3fa"/><circle cx="563.2" cy="1602.4" r="3.3" fill="#8fd3fa"/><circle cx="144.3" cy="1647.7" r="3.3" fill="#8fd3fa"/><circle cx="80.2" cy="1614.2" r="3.3" fill="#8fd3fa"/><circle cx="458.5" cy="1624.7" r="3.3" fill="#8fd3fa"/><circle cx="86.1" cy="1631.9" r="3.3" fill="#8fd3fa"/><circle cx="467.6" cy="1658.2" r="3.3" fill="#8fd3fa"/><circle cx="527.0" cy="1619.9" r="3.3" fill="#8fd3fa"/><circle cx="461.4" cy="1645.5" r="3.3" fill="#8fd3fa"/><circle cx="528.7" cy="1648.3" r="3.3" fill="#8fd3fa"/><circle cx="495.8" cy="1653.5" r="3.3" fill="#8fd3fa"/><circle cx="408.6" cy="1622.2" r="3.3" fill="#8fd3fa"/><circle cx="437.9" cy="1641.8" r="3.3" fill="#8fd3fa"/><circle cx="522.0" cy="1637.0" r="3.3" fill="#8fd3fa"/><circle cx="152.9" cy="1643.0" r="3.3" fill="#8fd3fa"/><circle cx="78.2" cy="1624.8" r="3.3" fill="#8fd3fa"/><circle cx="29.9" cy="1639.9" r="3.3" fill="#8fd3fa"/><circle cx="81.2" cy="1638.5" r="3.3" fill="#8fd3fa"/><circle cx="292.4" cy="1639.8" r="3.3" fill="#8fd3fa"/><circle cx="510.1" cy="1642.2" r="3.3" fill="#8fd3fa"/><circle cx="496.9" cy="1601.1" r="3.3" fill="#8fd3fa"/><circle cx="330.9" cy="1638.6" r="3.3" fill="#8fd3fa"/><circle cx="496.8" cy="1648.1" r="3.3" fill="#8fd3fa"/><circle cx="245.0" cy="1633.5" r="3.3" fill="#8fd3fa"/><circle cx="40.0" cy="1660.5" r="3.3" fill="#8fd3fa"/><circle cx="374.8" cy="1646.8" r="3.3" fill="#8fd3fa"/><circle cx="359.0" cy="1605.6" r="3.3" fill="#8fd3fa"/><circle cx="551.1" cy="1648.9" r="3.3" fill="#8fd3fa"/><circle cx="581.1" cy="1630.9" r="3.3" fill="#8fd3fa"/><circle cx="284.4" cy="1640.8" r="3.3" fill="#8fd3fa"/><circle cx="15.2" cy="1658.0" r="3.3" fill="#8fd3fa"/><circle cx="368.3" cy="1650.5" r="3.3" fill="#8fd3fa"/><circle cx="509.4" cy="1631.4" r="3.3" fill="#8fd3fa"/><circle cx="278.3" cy="1633.0" r="3.3" fill="#8fd3fa"/><circle cx="455.0" cy="1641.5" r="3.3" fill="#8fd3fa"/><circle cx="254.8" cy="1623.1" r="3.3" fill="#8fd3fa"/><circle cx="325.8" cy="1636.2" r="3.3" fill="#8fd3fa"/><circle cx="169.9" cy="1655.1" r="3.3" fill="#8fd3fa"/><circle cx="236.0" cy="1655.1" r="3.3" fill="#8fd3fa"/><circle cx="157.2" cy="1640.4" r="3.3" fill="#8fd3fa"/><circle cx="577.1" cy="1640.5" r="3.3" fill="#8fd3fa"/><circle cx="467.8" cy="1647.6" r="3.3" fill="#8fd3fa"/><circle cx="184.3" cy="1631.0" r="3.3" fill="#8fd3fa"/><circle cx="345.1" cy="1629.0" r="3.3" fill="#8fd3fa"/><circle cx="463.2" cy="1646.7" r="3.3" fill="#8fd3fa"/><circle cx="426.4" cy="1607.3" r="3.3" fill="#8fd3fa"/><circle cx="320.6" cy="1657.5" r="3.3" fill="#8fd3fa"/><circle cx="174.3" cy="1608.6" r="3.3" fill="#8fd3fa"/><circle cx="108.4" cy="1601.0" r="3.3" fill="#8fd3fa"/><circle cx="358.4" cy="1658.9" r="3.3" fill="#8fd3fa"/><circle cx="466.0" cy="1647.8" r="3.3" fill="#8fd3fa"/><circle cx="360.2" cy="1658.5" r="3.3" fill="#8fd3fa"/><circle cx="369.2" cy="1645.9" r="3.3" fill="#8fd3fa"/><circle cx="351.0" cy="1649.5" r="3.3" fill="#8fd3fa"/><circle cx="121.9" cy="1648.8" r="3.3" fill="#8fd3fa"/><circle cx="268.4" cy="1648.2" r="3.3" fill="#8fd3fa"/><circle cx="55.5" cy="1652.4" r="3.3" fill="#8fd3fa"/><circle cx="17.1" cy="1621.0" r="3.3" fill="#8fd3fa"/><circle cx="540.7" cy="1652.9" r="3.3" fill="#8fd3fa"/><circle cx="215.2" cy="1647.7" r="3.3" fill="#8fd3fa"/><circle cx="464.6" cy="1654.9" r="3.3" fill="#8fd3fa"/><circle cx="149.0" cy="1643.3" r="3.3" fill="#8fd3fa"/><circle cx="246.8" cy="1629.2" r="3.3" fill="#8fd3fa"/><circle cx="252.1" cy="1630.2" r="3.3" fill="#8fd3fa"/><circle cx="552.5" cy="1647.0" r="3.3" fill="#8fd3fa"/><circle cx="333.8" cy="1609.2" r="3.3" fill="#8fd3fa"/><circle cx="66.0" cy="1607.2" r="3.3" fill="#8fd3fa"/><circle cx="338.5" cy="1654.4" r="3.3" fill="#8fd3fa"/><circle cx="261.5" cy="1658.8" r="3.3" fill="#8fd3fa"/><circle cx="226.1" cy="1603.0" r="3.3" fill="#8fd3fa"/><circle cx="554.8" cy="1644.7" r="3.3" fill="#8fd3fa"/><circle cx="278.8" cy="1661.3" r="3.3" fill="#8fd3fa"/><circle cx="55.9" cy="1635.6" r="3.3" fill="#8fd3fa"/><circle cx="121.7" cy="1647.2" r="3.3" fill="#8fd3fa"/><circle cx="4.3" cy="1618.6" r="3.3" fill="#8fd3fa"/><circle cx="403.2" cy="1600.6" r="3.3" fill="#8fd3fa"/><circle cx="571.9" cy="1616.1" r="3.3" fill="#8fd3fa"/><circle cx="514.1" cy="1612.9" r="3.3" fill="#8fd3fa"/><circle cx="5.6" cy="1616.7" r="3.3" fill="#8fd3fa"/><circle cx="139.6" cy="1650.5" r="3.3" fill="#8fd3fa"/><circle cx="106.9" cy="1651.1" r="3.3" fill="#8fd3fa"/><circle cx="457.1" cy="1608.6" r="3.3" fill="#8fd3fa"/><circle cx="505.7" cy="1650.3" r="3.3" fill="#8fd3fa"/><circle cx="45.3" cy="1651.0" r="3.3" fill="#8fd3fa"/><circle cx="418.4" cy="1646.4" r="3.3" fill="#8fd3fa"/><circle cx="551.6" cy="1638.2" r="3.3" fill="#8fd3fa"/><circle cx="570.7" cy="1626.1" r="3.3" fill="#8fd3fa"/><circle cx="1.8" cy="1650.4" r="3.3" fill="#8fd3fa"/><circle cx="383.5" cy="1603.1" r="3.3" fill="#8fd3fa"/><circle cx="42.6" cy="1654.7" r="3.3" fill="#8fd3fa"/><circle cx="430.5" cy="1629.8" r="3.3" fill="#8fd3fa"/><circle cx="509.0" cy="1619.8" r="3.3" fill="#8fd3fa"/><circle cx="30.7" cy="1639.5" r="3.3" fill="#8fd3fa"/><circle cx="338.3" cy="1633.1" r="3.3" fill="#8fd3fa"/><circle cx="399.1" cy="1637.0" r="3.3" fill="#8fd3fa"/><circle cx="471.0" cy="1618.1" r="3.3" fill="#8fd3fa"/><circle cx="380.0" cy="1632.9" r="3.3" fill="#8fd3fa"/><circle cx="244.5" cy="1646.5" r="3.3" fill="#8fd3fa"/><circle cx="464.4" cy="1634.1" r="3.3" fill="#8fd3fa"/><circle cx="463.4" cy="1659.9" r="3.3" fill="#8fd3fa"/><circle cx="169.6" cy="1643.5" r="3.3" fill="#8fd3fa"/><circle cx="576.4" cy="1609.9" r="3.3" fill="#8fd3fa"/><circle cx="489.0" cy="1649.8" r="3.3" fill="#8fd3fa"/><circle cx="356.7" cy="1631.0" r="3.3" fill="#8fd3fa"/><circle cx="491.3" cy="1661.1" r="3.3" fill="#8fd3fa"/><circle cx="179.2" cy="1645.2" r="3.3" fill="#8fd3fa"/><circle cx="525.2" cy="1636.5" r="3.3" fill="#8fd3fa"/><circle cx="403.8" cy="1633.6" r="3.3" fill="#8fd3fa"/><circle cx="530.0" cy="1645.2" r="3.3" fill="#8fd3fa"/><circle cx="164.1" cy="1654.3" r="3.3" fill="#8fd3fa"/><circle cx="152.0" cy="1599.4" r="3.3" fill="#8fd3fa"/><circle cx="345.2" cy="1636.2" r="3.3" fill="#8fd3fa"/><circle cx="524.8" cy="1654.6" r="3.3" fill="#8fd3fa"/><circle cx="492.4" cy="1607.6" r="3.3" fill="#8fd3fa"/><circle cx="512.7" cy="1654.5" r="3.3" fill="#8fd3fa"/><circle cx="158.5" cy="1643.8" r="3.3" fill="#8fd3fa"/><circle cx="476.8" cy="1656.1" r="3.3" fill="#8fd3fa"/><circle cx="540.5" cy="1649.0" r="3.3" fill="#8fd3fa"/><circle cx="45.8" cy="1631.9" r="3.3" fill="#8fd3fa"/><circle cx="471.0" cy="1642.9" r="3.3" fill="#8fd3fa"/><circle cx="442.9" cy="1622.4" r="3.3" fill="#8fd3fa"/><circle cx="134.7" cy="1659.3" r="3.3" fill="#8fd3fa"/><circle cx="399.6" cy="1645.4" r="3.3" fill="#8fd3fa"/><circle cx="118.3" cy="1638.4" r="3.3" fill="#8fd3fa"/><circle cx="147" cy="1567.8" r="3.3" fill="#ef8a7b"/><circle cx="179.9" cy="1582.7" r="3.3" fill="#ef8a7b"/><circle cx="181.8" cy="1595.7" r="3.3" fill="#ef8a7b"/><circle cx="240.4" cy="1586.3" r="3.3" fill="#ef8a7b"/><circle cx="290.5" cy="1569.1" r="3.3" fill="#ef8a7b"/><circle cx="285.6" cy="1586.6" r="3.3" fill="#ef8a7b"/><circle cx="291.5" cy="1592.5" r="3.3" fill="#ef8a7b"/><circle cx="301.6" cy="1588.6" r="3.3" fill="#ef8a7b"/><circle cx="301.6" cy="1599.7" r="3.3" fill="#ef8a7b"/><circle cx="314.9" cy="1595.1" r="3.3" fill="#ef8a7b"/><circle cx="320.4" cy="1597.7" r="3.3" fill="#ef8a7b"/><circle cx="332.1" cy="1587.3" r="3.3" fill="#ef8a7b"/><circle cx="350" cy="1569.1" r="3.3" fill="#ef8a7b"/><circle cx="366.6" cy="1584.7" r="3.3" fill="#ef8a7b"/><circle cx="377.7" cy="1592.2" r="3.3" fill="#ef8a7b"/><circle cx="383.5" cy="1577.8" r="3.3" fill="#ef8a7b"/><circle cx="399.5" cy="1538.2" r="3.3" fill="#ef8a7b"/><circle cx="403.7" cy="1572.6" r="3.3" fill="#ef8a7b"/><circle cx="425.5" cy="1588.3" r="3.3" fill="#ef8a7b"/><circle cx="433.3" cy="1546.6" r="3.3" fill="#ef8a7b"/><circle cx="434.3" cy="1551.8" r="3.3" fill="#ef8a7b"/><circle cx="436.9" cy="1495.2" r="3.3" fill="#ef8a7b"/><circle cx="441.4" cy="1577.2" r="3.3" fill="#ef8a7b"/><circle cx="448.6" cy="1585.3" r="3.3" fill="#ef8a7b"/><circle cx="449.3" cy="1509.9" r="3.3" fill="#ef8a7b"/><circle cx="457.4" cy="1570.7" r="3.3" fill="#ef8a7b"/><circle cx="462.6" cy="1582.1" r="3.3" fill="#ef8a7b"/><circle cx="467.8" cy="1542.7" r="3.3" fill="#ef8a7b"/><circle cx="480.2" cy="1595.7" r="3.3" fill="#ef8a7b"/><circle cx="488" cy="1490" r="3.3" fill="#ef8a7b"/><circle cx="491.5" cy="1591.2" r="3.3" fill="#ef8a7b"/><circle cx="506.5" cy="1593.1" r="3.3" fill="#ef8a7b"/><circle cx="516" cy="1481.9" r="3.3" fill="#ef8a7b"/><circle cx="518.6" cy="1597.7" r="3.3" fill="#ef8a7b"/><circle cx="519.8" cy="1520.9" r="3.3" fill="#ef8a7b"/><circle cx="529" cy="1505.3" r="3.3" fill="#ef8a7b"/><circle cx="532.2" cy="1588.9" r="3.3" fill="#ef8a7b"/><circle cx="533.5" cy="1579.8" r="3.3" fill="#ef8a7b"/><circle cx="543.3" cy="1548.6" r="3.3" fill="#ef8a7b"/><circle cx="561.2" cy="1569.7" r="3.3" fill="#ef8a7b"/><circle cx="561.8" cy="1546" r="3.3" fill="#ef8a7b"/><circle cx="565.1" cy="1575.6" r="3.3" fill="#ef8a7b"/><circle cx="576.1" cy="1577.9" r="3.3" fill="#ef8a7b"/><circle cx="579.4" cy="1592.8" r="3.3" fill="#ef8a7b"/><circle cx="587.8" cy="1590.5" r="3.3" fill="#ef8a7b"/></svg><div class="t" style="left:641.60px;top:1472.16px;font-family:'Liberation Sans', sans-serif;font-size:18.0px;color:#2a3f5f">Outlier Status</div><svg class="a" style="left:658.80px;top:1501.40px;" width="7" height="7" viewBox="0 0 7 7"><circle cx="3.5" cy="3.5" r="3.3" fill="#ef8a7b"/></svg><div class="t" style="left:685.90px;top:1496.69px;font-family:'Liberation Sans', sans-serif;font-size:15.6px;color:#2a3f5f">True</div><svg class="a" style="left:658.80px;top:1523.90px;" width="7" height="7" viewBox="0 0 7 7"><circle cx="3.5" cy="3.5" r="3.3" fill="#8fd3fa"/></svg><div class="t" style="left:685.90px;top:1519.69px;font-family:'Liberation Sans', sans-serif;font-size:15.6px;color:#2a3f5f">False</div></div><svg class="a" style="left:327.00px;top:1195.50px;" width="6" height="3" viewBox="0 0 6 3"><path d="M0 3 A3 3 0 0 1 6 3 Z" fill="#1a1a2a"/></svg><div class="a" style="left:1186.40px;top:1198.30px;width:883.60px;height:501.70px;background:#fff;border:1.5px solid #e6e6e6;border-radius:12px"></div><div class="a" style="left:0;top:0;width:2932px;height:1652px;clip-path:inset(1200.3px 864.0px 0px 1188.4px round 10px)"><svg class="a" style="left:1202.80px;top:1213.50px;" width="18" height="18.5" viewBox="0 0 18 18.5"><g fill="#7eb1ec"><path d="M8.8 0.3 C4.5 0.3 4.8 2.2 4.8 2.2 V4.3 H9 V5 H3 C3 5 0.2 4.7 0.2 9.2 C0.2 13.7 2.7 13.5 2.7 13.5 H4.2 V11.4 C4.2 11.4 4.1 8.9 6.6 8.9 H10.9 C10.9 8.9 13.2 8.9 13.2 6.7 V2.6 C13.2 2.6 13.5 0.3 8.8 0.3Z"/><path d="M9.2 18.2 C13.5 18.2 13.2 16.3 13.2 16.3 V14.2 H9 V13.5 H15 C15 13.5 17.8 13.8 17.8 9.3 C17.8 4.8 15.3 5 15.3 5 H13.8 V7.1 C13.8 7.1 13.9 9.6 11.4 9.6 H7.1 C7.1 9.6 4.8 9.6 4.8 11.8 V15.9 C4.8 15.9 4.5 18.2 9.2 18.2Z"/></g><circle cx="6.7" cy="2.4" r="0.8" fill="#fff"/><circle cx="11.3" cy="16.1" r="0.8" fill="#fff"/></svg><div class="t" style="left:1232.50px;top:1212.39px;font-family:'Liberation Sans', sans-serif;font-size:19.5px;color:#111;-webkit-text-stroke:0.3px #111">platform_performance_comparison</div><div class="a" style="left:1188.40px;top:1251.30px;width:37.90px;height:20.40px;background:#e3eefa"></div><div class="a" style="left:1226.30px;top:1251.30px;width:841.70px;height:20.40px;background:#f1f8fd"></div><div class="a" style="left:1225.80px;top:1246.40px;width:1.00px;height:405.60px;background:#f3f3f3"></div><div class="t" style="left:1170.90px;top:1254.73px;width:40px;text-align:right;font-family:'Liberation Mono', monospace;font-size:15.37px;-webkit-text-stroke-width:0.2px;color:#555">1</div><div class="t" style="left:1234.30px;top:1254.73px;font-family:'Liberation Mono', monospace;font-size:15.37px;-webkit-text-stroke-width:0.2px;"><span style="color:#5aac95">import</span><span style="color:#1a1a1a"> plotly.graph_objects </span><span style="color:#5aac95">as</span><span style="color:#1a1a1a"> go</span></div><div class="t" style="left:1170.90px;top:1276.08px;width:40px;text-align:right;font-family:'Liberation Mono', monospace;font-size:15.37px;-webkit-text-stroke-width:0.2px;color:#555">2</div><div class="t" style="left:1234.30px;top:1276.08px;font-family:'Liberation Mono', monospace;font-size:15.37px;-webkit-text-stroke-width:0.2px;"><span style="color:#5aac95">import</span><span style="color:#1a1a1a"> pandas </span><span style="color:#5aac95">as</span><span style="color:#1a1a1a"> pd</span></div><div class="t" style="left:1170.90px;top:1297.43px;width:40px;text-align:right;font-family:'Liberation Mono', monospace;font-size:15.37px;-webkit-text-stroke-width:0.2px;color:#555">3</div><div class="t" style="left:1170.90px;top:1318.78px;width:40px;text-align:right;font-family:'Liberation Mono', monospace;font-size:15.37px;-webkit-text-stroke-width:0.2px;color:#555">4</div><div class="t" style="left:1234.30px;top:1318.78px;font-family:'Liberation Mono', monospace;font-size:15.37px;-webkit-text-stroke-width:0.2px;"><span style="color:#a0591f"># Aggregate data by platform (ad group)</span></div><div class="t" style="left:1170.90px;top:1340.13px;width:40px;text-align:right;font-family:'Liberation Mono', monospace;font-size:15.37px;-webkit-text-stroke-width:0.2px;color:#555">5</div><div class="t" style="left:1234.30px;top:1340.13px;font-family:'Liberation Mono', monospace;font-size:15.37px;-webkit-text-stroke-width:0.2px;"><span style="color:#1a1a1a">platform_summary = dataframe2.groupby(</span><span style="color:#a31515">'platform'</span><span style="color:#1a1a1a">).agg({</span></div><div class="t" style="left:1170.90px;top:1361.48px;width:40px;text-align:right;font-family:'Liberation Mono', monospace;font-size:15.37px;-webkit-text-stroke-width:0.2px;color:#555">6</div><div class="t" style="left:1234.30px;top:1361.48px;font-family:'Liberation Mono', monospace;font-size:15.37px;-webkit-text-stroke-width:0.2px;"><span style="color:#1a1a1a">    </span><span style="color:#a31515">'revenue'</span><span style="color:#1a1a1a">: </span><span style="color:#a31515">'sum'</span><span style="color:#1a1a1a">,</span></div><div class="t" style="left:1170.90px;top:1382.83px;width:40px;text-align:right;font-family:'Liberation Mono', monospace;font-size:15.37px;-webkit-text-stroke-width:0.2px;color:#555">7</div><div class="t" style="left:1234.30px;top:1382.83px;font-family:'Liberation Mono', monospace;font-size:15.37px;-webkit-text-stroke-width:0.2px;"><span style="color:#1a1a1a">    </span><span style="color:#a31515">'spend'</span><span style="color:#1a1a1a">: </span><span style="color:#a31515">'sum'</span></div><div class="t" style="left:1170.90px;top:1404.18px;width:40px;text-align:right;font-family:'Liberation Mono', monospace;font-size:15.37px;-webkit-text-stroke-width:0.2px;color:#555">8</div><div class="t" style="left:1234.30px;top:1404.18px;font-family:'Liberation Mono', monospace;font-size:15.37px;-webkit-text-stroke-width:0.2px;"><span style="color:#1a1a1a">}).reset_index()</span></div><div class="t" style="left:1170.90px;top:1425.53px;width:40px;text-align:right;font-family:'Liberation Mono', monospace;font-size:15.37px;-webkit-text-stroke-width:0.2px;color:#555">9</div><div class="t" style="left:1170.90px;top:1446.88px;width:40px;text-align:right;font-family:'Liberation Mono', monospace;font-size:15.37px;-webkit-text-stroke-width:0.2px;color:#555">10</div><div class="t" style="left:1234.30px;top:1446.88px;font-family:'Liberation Mono', monospace;font-size:15.37px;-webkit-text-stroke-width:0.2px;"><span style="color:#a0591f"># Sort by revenue for better visualization</span></div><div class="t" style="left:1170.90px;top:1468.23px;width:40px;text-align:right;font-family:'Liberation Mono', monospace;font-size:15.37px;-webkit-text-stroke-width:0.2px;color:#555">11</div><div class="t" style="left:1234.30px;top:1468.23px;font-family:'Liberation Mono', monospace;font-size:15.37px;-webkit-text-stroke-width:0.2px;"><span style="color:#1a1a1a">platform_summary = platform_summary.sort_values(</span><span style="color:#a31515">'revenue'</span><span style="color:#1a1a1a">, ascending=</span><span style="color:#221199">False</span><span style="color:#1a1a1a">)</span></div><div class="t" style="left:1170.90px;top:1489.58px;width:40px;text-align:right;font-family:'Liberation Mono', monospace;font-size:15.37px;-webkit-text-stroke-width:0.2px;color:#555">12</div><div class="t" style="left:1170.90px;top:1510.93px;width:40px;text-align:right;font-family:'Liberation Mono', monospace;font-size:15.37px;-webkit-text-stroke-width:0.2px;color:#555">13</div><div class="t" style="left:1234.30px;top:1510.93px;font-family:'Liberation Mono', monospace;font-size:15.37px;-webkit-text-stroke-width:0.2px;"><span style="color:#a0591f"># Create figure</span></div><div class="t" style="left:1170.90px;top:1532.28px;width:40px;text-align:right;font-family:'Liberation Mono', monospace;font-size:15.37px;-webkit-text-stroke-width:0.2px;color:#555">14</div><div class="t" style="left:1234.30px;top:1532.28px;font-family:'Liberation Mono', monospace;font-size:15.37px;-webkit-text-stroke-width:0.2px;"><span style="color:#1a1a1a">fig = go.Figure()</span></div><div class="t" style="left:1170.90px;top:1553.63px;width:40px;text-align:right;font-family:'Liberation Mono', monospace;font-size:15.37px;-webkit-text-stroke-width:0.2px;color:#555">15</div><div class="t" style="left:1170.90px;top:1574.98px;width:40px;text-align:right;font-family:'Liberation Mono', monospace;font-size:15.37px;-webkit-text-stroke-width:0.2px;color:#555">16</div><div class="t" style="left:1234.30px;top:1574.98px;font-family:'Liberation Mono', monospace;font-size:15.37px;-webkit-text-stroke-width:0.2px;"><span style="color:#a0591f"># Add revenue bars (positive direction)</span></div><div class="t" style="left:1170.90px;top:1596.33px;width:40px;text-align:right;font-family:'Liberation Mono', monospace;font-size:15.37px;-webkit-text-stroke-width:0.2px;color:#555">17</div><div class="t" style="left:1234.30px;top:1596.33px;font-family:'Liberation Mono', monospace;font-size:15.37px;-webkit-text-stroke-width:0.2px;"><span style="color:#1a1a1a">fig.add_trace(go.Bar(</span></div><div class="t" style="left:1170.90px;top:1617.68px;width:40px;text-align:right;font-family:'Liberation Mono', monospace;font-size:15.37px;-webkit-text-stroke-width:0.2px;color:#555">18</div><div class="t" style="left:1234.30px;top:1617.68px;font-family:'Liberation Mono', monospace;font-size:15.37px;-webkit-text-stroke-width:0.2px;"><span style="color:#1a1a1a">    y=platform_summary[</span><span style="color:#a31515">'platform'</span><span style="color:#1a1a1a">],</span></div><div class="t" style="left:1170.90px;top:1639.03px;width:40px;text-align:right;font-family:'Liberation Mono', monospace;font-size:15.37px;-webkit-text-stroke-width:0.2px;color:#555">19</div><div class="t" style="left:1234.30px;top:1639.03px;font-family:'Liberation Mono', monospace;font-size:15.37px;-webkit-text-stroke-width:0.2px;"><span style="color:#1a1a1a">    x=platform_summary[</span><span style="color:#a31515">'revenue'</span><span style="color:#1a1a1a">],</span></div><svg class="a" style="left:1217.80px;top:1346.00px;" width="8" height="5" viewBox="0 0 8 5"><path d="M0.7 0.7 L4 4 L7.3 0.7" fill="none" stroke="#777" stroke-width="1.2"/></svg></div><svg class="a" style="left:1625.40px;top:1194.80px;" width="6" height="3" viewBox="0 0 6 3"><path d="M0 3 A3 3 0 0 1 6 3 Z" fill="#1a1a2a"/></svg><div class="a" style="left:27.80px;top:1370.30px;width:52.10px;height:259.30px;background:#fefefe;box-shadow:0 0 3px rgba(0,0,0,0.12)"></div><div class="a" style="left:27.80px;top:1419.50px;width:52.10px;height:2.00px;background:#eeeeee"></div><div class="a" style="left:27.80px;top:1471.60px;width:52.10px;height:2.00px;background:#eeeeee"></div><div class="a" style="left:27.80px;top:1523.70px;width:52.10px;height:2.00px;background:#eeeeee"></div><div class="a" style="left:27.80px;top:1575.80px;width:52.10px;height:2.00px;background:#eeeeee"></div><svg class="a" style="left:41.85px;top:1383.50px;" width="24" height="24" viewBox="0 0 24 24"><path d="M12 0.5 V23.5 M0.5 12 H23.5" stroke="#111" stroke-width="2.6"/></svg><svg class="a" style="left:41.85px;top:1444.50px;" width="24" height="4" viewBox="0 0 24 4"><path d="M0 2 H24" stroke="#111" stroke-width="2.8"/></svg><svg class="a" style="left:41.85px;top:1487.50px;" width="24" height="22" viewBox="0 0 24 22"><g fill="none" stroke="#111" stroke-width="2.6" stroke-linejoin="round" stroke-linecap="round"><path d="M1.3 7 V3.5 Q1.3 1.3 3.5 1.3 H7 M17 1.3 H20.5 Q22.7 1.3 22.7 3.5 V7 M22.7 15 V18.5 Q22.7 20.7 20.5 20.7 H17 M7 20.7 H3.5 Q1.3 20.7 1.3 18.5 V15"/></g></svg><svg class="a" style="left:44.35px;top:1538.50px;" width="19" height="24" viewBox="0 0 19 24"><path d="M13.5 9 V6.5 Q13.5 1.5 9.5 1.5 Q6.5 1.5 5.8 4" fill="none" stroke="#111" stroke-width="2.4"/><rect x="0.5" y="8.5" width="18" height="14.5" rx="3" fill="#111"/><circle cx="9.5" cy="15.8" r="2.3" fill="#fff"/></svg><svg class="a" style="left:43.85px;top:1593.50px;" width="22" height="19" viewBox="0 0 22 19"><g fill="none" stroke="#111" stroke-width="1.9" stroke-linecap="round"><path d="M0.8 4.5 Q6 4.5 10.5 9.5 Q15 14.5 20.5 14.5 M0.8 14.5 Q6 14.5 10.5 9.5 Q15 4.5 20.5 4.5"/><path d="M17.5 1.5 L20.8 4.5 L17.5 7.5 M17.5 11.5 L20.8 14.5 L17.5 17.5"/></g></svg><div class="a" style="left:0;top:0;width:2131px;height:150px;background:linear-gradient(to bottom,#fff 0px,#fff 110px,rgba(255,255,255,0.75) 122px,rgba(255,255,255,0.25) 137px,rgba(255,255,255,0) 150px)"></div><div class="a" style="left:48.40px;top:49.30px;width:27.00px;height:2.60px;background:#111;border-radius:1px"></div><div class="a" style="left:48.40px;top:58.50px;width:27.00px;height:2.60px;background:#111;border-radius:1px"></div><div class="a" style="left:48.40px;top:67.60px;width:27.00px;height:2.60px;background:#111;border-radius:1px"></div><div class="t" style="left:126.60px;top:24.89px;font-family:'Liberation Sans', sans-serif;font-size:37.8px;color:#0b0b0b;-webkit-text-stroke:0.6px #0b0b0b">Campaign spend analysis</div><svg class="a" style="left:129.50px;top:79.70px;" width="21.3" height="20.3" viewBox="0 0 21.3 20.3"><g fill="none" stroke="#555" stroke-width="2.0"><ellipse cx="10.65" cy="10.15" rx="11.08" ry="4.47" transform="rotate(45 10.65 10.15)"/><ellipse cx="10.65" cy="10.15" rx="11.08" ry="4.47" transform="rotate(-45 10.65 10.15)"/></g><circle cx="10.65" cy="10.15" r="1.50" fill="#555"/></svg><div class="t" style="left:162.20px;top:79.06px;font-family:'Liberation Sans', sans-serif;font-size:22.6px;color:#5c5c5c">Created by Marc Dupuis</div><div class="t" style="left:422.60px;top:78.90px;font-family:'Liberation Sans', sans-serif;font-size:22.8px;color:#3a7ff6;text-decoration:underline;text-decoration-thickness:2px;text-underline-offset:3px">View Latest Smart Report</div><div class="a" style="left:1242.30px;top:14.50px;width:451.50px;height:66.60px;border:2px solid #d5d5d5;border-radius:9px;background:#fff;overflow:hidden"></div><div class="a" style="left:1476.50px;top:16.50px;width:215.30px;height:62.60px;background:#f3f3f3;border-radius:0 7px 7px 0"></div><svg class="a" style="left:1271.50px;top:35.90px;" width="24.5" height="23.9" viewBox="0 0 24.5 23.9"><g fill="none" stroke="#111" stroke-width="2.3"><ellipse cx="12.25" cy="11.95" rx="12.74" ry="5.26" transform="rotate(45 12.25 11.95)"/><ellipse cx="12.25" cy="11.95" rx="12.74" ry="5.26" transform="rotate(-45 12.25 11.95)"/></g><circle cx="12.25" cy="11.95" r="1.72" fill="#111"/></svg><div class="t" style="left:1316.40px;top:33.83px;font-family:'Liberation Sans', sans-serif;font-size:27.6px;color:#111;-webkit-text-stroke:0.35px #111">Smartbook</div><svg class="a" style="left:1503.60px;top:36.50px;" width="27" height="24" viewBox="0 0 27 24"><g fill="none" stroke="#111" stroke-width="2.2" stroke-linejoin="round"><rect x="1.1" y="8.6" width="6.6" height="6.6" rx="1.4"/><rect x="18.6" y="1.1" width="7.4" height="7.4" rx="1.6"/><rect x="18.6" y="15.5" width="7.4" height="7.4" rx="1.6"/><path d="M7.7 11.9 H12.5 M12.5 4.8 V19.2 M12.5 4.8 H18.6 M12.5 19.2 H18.6"/></g></svg><div class="t" style="left:1551.20px;top:33.83px;font-family:'Liberation Sans', sans-serif;font-size:27.6px;color:#111;-webkit-text-stroke:0.35px #111">Workflow</div><div class="a" style="left:2348.00px;top:36.10px;width:147.10px;height:47.80px;background:#60a5f6;border-radius:9px"></div><svg class="a" style="left:2365.60px;top:51.50px;" width="17" height="17" viewBox="0 0 17 17"><g fill="none" stroke="#fff" stroke-width="1.9"><rect x="1" y="1" width="6" height="6" rx="1.2"/><rect x="10" y="1" width="6" height="6" rx="1.2"/><rect x="1" y="10" width="6" height="6" rx="1.2"/><rect x="10" y="10" width="6" height="6" rx="1.2"/></g></svg><div class="t" style="left:2394.80px;top:49.08px;font-family:'Liberation Sans', sans-serif;font-size:24.0px;color:#fff;font-weight:700">Publish</div><div class="a" style="left:2511.30px;top:36.10px;width:126.60px;height:47.80px;background:#f3f3f3;border-radius:9px"></div><svg class="a" style="left:2527.20px;top:49.50px;" width="19" height="21" viewBox="0 0 19 21"><g fill="none" stroke="#111" stroke-width="2"><circle cx="15" cy="4" r="3"/><circle cx="4" cy="10.5" r="3"/><circle cx="15" cy="17" r="3"/><path d="M6.6 9 L12.4 5.5 M6.6 12 L12.4 15.5"/></g></svg><div class="t" style="left:2557.60px;top:48.40px;font-family:'Liberation Sans', sans-serif;font-size:24.8px;color:#111;-webkit-text-stroke:0.3px #111">Share</div><div class="a" style="left:2654.30px;top:36.10px;width:59.40px;height:47.80px;background:#f3f3f3;border-radius:9px"></div><div class="a" style="left:2681.3px;top:48.8px;width:4.4px;height:4.4px;border-radius:50%;background:#111"></div><div class="a" style="left:2681.3px;top:57.699999999999996px;width:4.4px;height:4.4px;border-radius:50%;background:#111"></div><div class="a" style="left:2681.3px;top:66.7px;width:4.4px;height:4.4px;border-radius:50%;background:#111"></div><div class="a" style="left:2761.7px;top:35.8px;width:48.2px;height:48.2px;border-radius:50%;background:#afb4df"></div><div class="t" style="left:2778.00px;top:47.04px;font-family:'Liberation Sans', sans-serif;font-size:27.0px;color:#fff">L</div><svg class="a" style="left:2718.90px;top:32.90px;" width="54" height="54" viewBox="0 0 54 54"><defs><clipPath id="av"><circle cx="27" cy="27" r="24"/></clipPath><linearGradient id="sky" x1="0" y1="0" x2="0" y2="1"><stop offset="0" stop-color="#4f86d6"/><stop offset="0.45" stop-color="#c4d6ee"/><stop offset="1" stop-color="#e9eef4"/></linearGradient></defs><circle cx="27" cy="27" r="27" fill="#fff"/><g clip-path="url(#av)"><g transform="translate(3 3)"><rect width="48" height="48" fill="url(#sky)"/><path d="M0 14 L8 12 L13 16 L13 32 L0 34Z" fill="#8d939b"/><path d="M37 20 L41 14 L44 19 L47 15 L48 16 L48 31 L37 31Z" fill="#66755f"/><rect x="35" y="30" width="13" height="12" fill="#f2f4f7"/><path d="M12.5 29 Q11 6 25.5 4 Q39.5 5 38.5 29 Z" fill="#3b4a63"/><ellipse cx="25.8" cy="25" rx="10" ry="12.8" fill="#c8957a"/><path d="M14.5 14.5 Q26 12.5 37.5 14.5 L37 17 Q26 15.5 15 17Z" fill="#3b4a63"/><circle cx="20.5" cy="18.4" r="4.6" fill="#2b1d17" stroke="#a1622f" stroke-width="1.3"/><circle cx="32.2" cy="18.4" r="4.3" fill="#2b1d17" stroke="#a1622f" stroke-width="1.3"/><path d="M20.5 26.5 Q26 24.5 31.5 26.5 L31 27.8 Q26 26.5 21 27.8Z" fill="#8a6046"/><path d="M21.5 27.6 Q26.5 31.5 31.3 27.6 Q26.5 29 21.5 27.6Z" fill="#f3e9dc"/><path d="M0 33 Q7 25 13 29 L20 38 Q26 43 31 39 L38 31 Q44 33 48 38 L48 48 L0 48Z" fill="#302e34"/><path d="M8 28 Q13 27 16 35 L10 40Z" fill="#111"/></g></g></svg><div class="a" style="left:2842.00px;top:36.10px;width:47.70px;height:47.80px;background:#f6f6f6;border-radius:9px"></div><svg class="a" style="left:2852.50px;top:46.00px;" width="26" height="27" viewBox="0 0 26 27"><g fill="none" stroke="#111" stroke-width="2" stroke-linejoin="round"><path d="M13 2 C7.5 2 5 6.5 5 11 L5 16 L2.5 20.5 L23.5 20.5 L21 16 L21 11 C21 6.5 18.5 2 13 2Z"/><path d="M10 21 Q10 25 13 25 Q16 25 16 21"/></g></svg><div class="a" style="left:30.0px;top:144px;width:64px;height:64px;border-radius:50%;background:#7cc46f;border:1.6px solid #62a656"></div><svg class="a" style="left:53.00px;top:161.60px;" width="26" height="29" viewBox="0 0 26 29"><path d="M2 2 L24 14.5 L2 27 Z" fill="none" stroke="#fff" stroke-width="2.4" stroke-linejoin="round"/></svg><div class="a" style="left:30.0px;top:232px;width:64px;height:64px;border-radius:50%;background:#e0f2fe;border:1.6px solid #b6e0fb"></div><svg class="a" style="left:48.50px;top:250.50px;" width="27" height="27" viewBox="0 0 27 27"><path d="M13.5 0.5 V26.5 M0.5 13.5 H26.5" stroke="#3b82f6" stroke-width="2.4"/></svg><div class="a" style="left:30.0px;top:320px;width:64px;height:64px;border-radius:50%;background:#f3f3f3;"></div><svg class="a" style="left:48.40px;top:337.00px;" width="28" height="30" viewBox="0 0 28 30"><g fill="none" stroke="#111" stroke-width="2.3"><ellipse cx="14" cy="5.5" rx="12.5" ry="4.5"/><path d="M1.5 5.5 V24.5 Q1.5 29 14 29 Q26.5 29 26.5 24.5 V5.5"/><path d="M1.5 12 Q1.5 16.5 14 16.5 Q26.5 16.5 26.5 12"/><path d="M1.5 18.5 Q1.5 23 14 23 Q26.5 23 26.5 18.5"/></g></svg><div class="a" style="left:30.0px;top:408px;width:64px;height:64px;border-radius:50%;background:#f3f3f3;"></div><svg class="a" style="left:47.60px;top:425.20px;" width="29" height="29" viewBox="0 0 29 29"><g fill="none" stroke="#111" stroke-width="2.3"><circle cx="14.5" cy="14.5" r="13.2"/><path d="M10.5 11 Q10.5 7 14.5 7 Q18.5 7 18.5 10.8 Q18.5 13.5 14.5 15 V17"/></g><circle cx="14.5" cy="21.3" r="1.5" fill="#111"/></svg><div class="a" style="left:2164.50px;top:145.30px;width:739.70px;height:1480.80px;background:#fff;border:2px solid #e7e7e7;border-radius:20px;box-shadow:0 4px 28px rgba(0,0,0,0.07)"></div><div class="a" style="left:0;top:0;width:2932px;height:1652px;clip-path:inset(177px 29.800000000000182px 307px 2166.5px)"><div class="a" style="left:2402.00px;top:176.00px;width:12.00px;height:3.60px;background:#111;border-radius:0 0 6px 6px"></div><div class="a" style="left:2568.00px;top:176.00px;width:12.00px;height:3.60px;background:#111;border-radius:0 0 6px 6px"></div><div class="a" style="left:2636.00px;top:176.00px;width:12.00px;height:3.60px;background:#111;border-radius:0 0 6px 6px"></div><div class="t" style="left:2350.30px;top:190.49px;font-family:'Liberation Sans', sans-serif;font-size:25.4px;color:#111"><span style="font-weight:700;font-size:24.8px">Campaign (ID: 1771)</span> - 15.63x ROAS</div><div class="a" style="left:2405.2000000000003px;top:263.6px;width:8.4px;height:8.4px;border-radius:50%;background:#111"></div><div class="t" style="left:2430.10px;top:254.25px;font-family:'Liberation Sans', sans-serif;font-size:26.4px;color:#111">Generated <span style="font-family:'Liberation Mono', monospace;font-size:25.6px">285,820 in</span></div><div class="t" style="left:2430.10px;top:294.05px;font-family:'Liberation Sans', sans-serif;font-size:26.4px;color:#111"><span style="font-family:'Liberation Mono', monospace;font-size:25.6px">revenue from </span>18,283</div><div class="t" style="left:2430.10px;top:334.45px;font-family:'Liberation Sans', sans-serif;font-size:26.4px;color:#111">spend</div><div class="a" style="left:2405.2000000000003px;top:382.5px;width:8.4px;height:8.4px;border-radius:50%;background:#111"></div><div class="t" style="left:2430.10px;top:373.15px;font-family:'Liberation Sans', sans-serif;font-size:26.4px;color:#111">APAC market, Bundle Z focus</div><div class="t" style="left:2270.50px;top:438.45px;font-family:'Liberation Sans', sans-serif;font-size:26.4px;color:#111">Key Insights:</div><div class="a" style="left:2325.0px;top:511.79999999999995px;width:8.4px;height:8.4px;border-radius:50%;background:#111"></div><div class="t" style="left:2350.60px;top:502.45px;font-family:'Liberation Sans', sans-serif;font-size:26.4px;color:#111"><span style="font-weight:700;font-size:25.8px">Google Ads dominates</span> the top</div><div class="t" style="left:2350.60px;top:541.45px;font-family:'Liberation Sans', sans-serif;font-size:26.4px;color:#111">performers with 14 out of 20 best</div><div class="t" style="left:2350.60px;top:580.05px;font-family:'Liberation Sans', sans-serif;font-size:26.4px;color:#111">campaigns</div><div class="a" style="left:2325.0px;top:629.0px;width:8.4px;height:8.4px;border-radius:50%;background:#111"></div><div class="t" style="left:2350.60px;top:619.65px;font-family:'Liberation Sans', sans-serif;font-size:26.4px;color:#111"><span style="font-weight:700;font-size:25.8px">Retargeting campaigns</span> show</div><div class="t" style="left:2350.60px;top:658.25px;font-family:'Liberation Sans', sans-serif;font-size:26.4px;color:#111">exceptional performance across</div><div class="t" style="left:2350.60px;top:697.15px;font-family:'Liberation Sans', sans-serif;font-size:26.4px;color:#111">platforms</div><div class="a" style="left:2325.0px;top:746.2px;width:8.4px;height:8.4px;border-radius:50%;background:#111"></div><div class="t" style="left:2350.60px;top:736.85px;font-family:'Liberation Sans', sans-serif;font-size:26.4px;color:#111"><span style="font-weight:700;font-size:25.8px">Average ROAS</span> of top 20 campaigns</div><div class="t" style="left:2350.60px;top:776.45px;font-family:'Liberation Sans', sans-serif;font-size:26.4px;color:#111">is 11.86x (compared to overall</div><div class="t" style="left:2350.60px;top:815.05px;font-family:'Liberation Sans', sans-serif;font-size:26.4px;color:#111">average)</div><div class="a" style="left:2325.0px;top:863.4px;width:8.4px;height:8.4px;border-radius:50%;background:#111"></div><div class="t" style="left:2350.60px;top:854.05px;font-family:'Liberation Sans', sans-serif;font-size:26.4px;color:#111"><span style="font-weight:700;font-size:25.8px">Total performance</span>: <span style="font-family:'Liberation Mono', monospace;font-size:25.6px">330K spend</span></div><div class="t" style="left:2350.60px;top:893.65px;font-family:'Liberation Sans', sans-serif;font-size:26.4px;color:#111"><span style="font-family:'Liberation Mono', monospace;font-size:25.6px">generated nearly 4M</span> in</div><div class="t" style="left:2350.60px;top:933.25px;font-family:'Liberation Sans', sans-serif;font-size:26.4px;color:#111">revenue</div><div class="t" style="left:2270.50px;top:999.05px;font-family:'Liberation Sans', sans-serif;font-size:26.4px;color:#111">The data shows that retargeting</div><div class="t" style="left:2270.50px;top:1037.80px;font-family:'Liberation Sans', sans-serif;font-size:26.4px;color:#111">campaigns, particularly on Google Ads,</div><div class="t" style="left:2270.50px;top:1076.55px;font-family:'Liberation Sans', sans-serif;font-size:26.4px;color:#111">deliver the highest ROI. These campaigns</div><div class="t" style="left:2270.50px;top:1115.30px;font-family:'Liberation Sans', sans-serif;font-size:26.4px;color:#111">are effectively reaching users who have</div><div class="t" style="left:2270.50px;top:1154.05px;font-family:'Liberation Sans', sans-serif;font-size:26.4px;color:#111">already shown interest, leading to much</div><div class="t" style="left:2270.50px;top:1192.80px;font-family:'Liberation Sans', sans-serif;font-size:26.4px;color:#111">higher conversion rates and revenue</div><div class="t" style="left:2270.50px;top:1231.55px;font-family:'Liberation Sans', sans-serif;font-size:26.4px;color:#111">generation.</div></div><div class="a" style="left:2180.70px;top:402.00px;width:2.00px;height:419.20px;background:#b3d0f5"></div><div class="a" style="left:2180.70px;top:950.50px;width:2.00px;height:419.10px;background:#b3d0f5"></div><svg class="a" style="left:2173.00px;top:847.50px;" width="19.5" height="19.5" viewBox="0 0 19.5 19.5"><g fill="none" stroke="#6ea6ee" stroke-width="1.4" stroke-linecap="round" stroke-linejoin="round"><path d="M4.2 4.6 L0.5 8.3 L11.2 19 L14.9 15.3"/><path d="M7.3 5.1 L12.4 0.2 L19 6.8 L14 11.8"/><path d="M1.2 1.5 L17 18.4"/><path d="M5.3 13.3 L1 17.6"/></g></svg><div class="a" style="left:2176.2px;top:900.2px;width:2.6px;height:2.6px;border-radius:50%;background:#6ea6ee"></div><div class="a" style="left:2185.5px;top:900.2px;width:2.6px;height:2.6px;border-radius:50%;background:#6ea6ee"></div><div class="a" style="left:2176.2px;top:908.7px;width:2.6px;height:2.6px;border-radius:50%;background:#6ea6ee"></div><div class="a" style="left:2185.5px;top:908.7px;width:2.6px;height:2.6px;border-radius:50%;background:#6ea6ee"></div><div class="a" style="left:2176.2px;top:917.2px;width:2.6px;height:2.6px;border-radius:50%;background:#6ea6ee"></div><div class="a" style="left:2185.5px;top:917.2px;width:2.6px;height:2.6px;border-radius:50%;background:#6ea6ee"></div><div class="a" style="left:2844.50px;top:1223.20px;width:11.30px;height:111.80px;border-radius:6px;background:linear-gradient(to bottom,#dcdcdc 0%,#dedede 45%,rgba(230,230,230,0) 100%)"></div><div class="t" style="left:2214.70px;top:1354.77px;font-family:'Liberation Sans', sans-serif;font-size:22.0px;color:#6b6b6b;font-weight:700">Claude Sonnet 4</div><svg class="a" style="left:2409.40px;top:1364.50px;" width="18" height="10" viewBox="0 0 18 10"><path d="M1 9 L9 1.2 L17 9" fill="none" stroke="#666" stroke-width="2"/></svg><div class="t" style="left:2548.30px;top:1354.60px;width:300px;text-align:right;font-family:'Liberation Sans', sans-serif;font-size:22.2px;color:#7a7a7a;-webkit-text-stroke:0.5px #7a7a7a;letter-spacing:0.6px">Clear History</div><div class="a" style="left:2197.90px;top:1397.70px;width:657.90px;height:2.00px;background:#e9e9e9"></div><div class="a" style="left:2197.90px;top:1424.30px;width:43.60px;height:35.20px;background:#f3f3f3;border-radius:7px"></div><svg class="a" style="left:2210.70px;top:1432.90px;" width="18" height="18" viewBox="0 0 18 18"><path d="M9 0.5 V17.5 M0.5 9 H17.5" stroke="#222" stroke-width="2"/></svg><div class="a" style="left:2258.30px;top:1424.30px;width:225.40px;height:35.20px;background:#e0f2fe;border-radius:7px"></div><svg class="a" style="left:2270.00px;top:1434.50px;" width="16.3" height="20.5" viewBox="0 0 16.3 20.5"><path d="M0 3.2 Q0 0 8.15 0 Q16.3 0 16.3 3.2 V17.3 Q16.3 20.5 8.15 20.5 Q0 20.5 0 17.3 Z" fill="#3d8be6"/><path d="M0.6 3.2 Q0.6 5.6 8.15 5.6 Q15.7 5.6 15.7 3.2" fill="none" stroke="#e0f2fe" stroke-width="0.9"/><text x="8.15" y="14.2" font-family="Liberation Sans" font-weight="700" font-size="6.2" fill="#fff" text-anchor="middle">SQL</text></svg><div class="t" style="left:2298.60px;top:1430.01px;font-family:'Liberation Sans', sans-serif;font-size:24.2px;color:#111;-webkit-text-stroke:0.4px #111">cleaned_data</div><svg class="a" style="left:2456.30px;top:1434.00px;" width="16" height="16" viewBox="0 0 16 16"><path d="M1 1 L15 15 M15 1 L1 15" stroke="#222" stroke-width="1.8"/></svg><div class="a" style="left:2197.90px;top:1492.00px;width:657.90px;height:2.00px;background:#e9e9e9"></div><div class="a" style="left:2197.90px;top:1527.90px;width:48.10px;height:47.80px;background:#e95c4b;border-radius:3px"></div><svg class="a" style="left:2197.90px;top:1527.90px;" width="48" height="48" viewBox="0 0 48 48"><path d="M31.6 5.6 Q24 18 16.8 42.6" fill="none" stroke="#fcecea" stroke-width="3.4" stroke-linecap="round"/><path d="M16 24.8 Q22 21.5 31.2 24.2 Q24.5 24.2 19.5 27.5 Z" fill="#fcecea"/></svg><div class="t" style="left:2278.60px;top:1540.83px;font-family:'Liberation Sans', sans-serif;font-size:23.7px;color:#9ca3af">Ask Fabi.ai a question...</div><svg class="a" style="left:2755.70px;top:1537.00px;" width="24" height="27" viewBox="0 0 24 27"><path d="M20.5 10.5 L10.5 20.5 Q6.5 24.5 3.5 21.5 Q0.5 18.5 4.5 14.5 L15 4 Q17.5 1.5 19.8 3.8 Q22 6 19.5 8.5 L9.5 18.5 Q8 20 7 19 Q6 18 7.5 16.5 L16 8" fill="none" stroke="#111" stroke-width="2"/></svg><svg class="a" style="left:2820.30px;top:1538.30px;" width="26" height="28" viewBox="0 0 26 28"><path d="M1.5 1.5 L25 14 L1.5 26.5 L6.5 14 Z M6.5 14 H25" fill="none" stroke="#111" stroke-width="2" stroke-linejoin="round"/></svg></body></html>
